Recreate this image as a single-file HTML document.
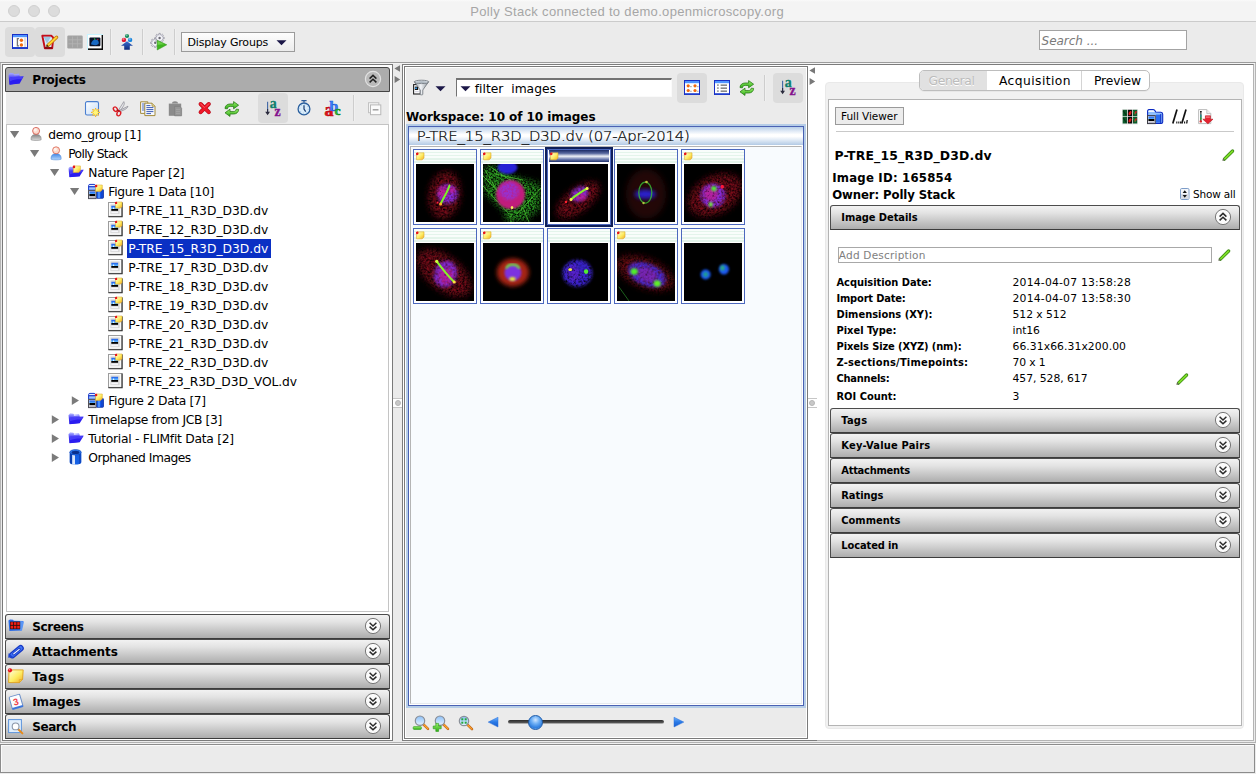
<!DOCTYPE html>
<html lang="en"><head><meta charset="utf-8"><title>Polly Stack connected to demo.openmicroscopy.org</title>
<style>
html,body{margin:0;padding:0}
body{width:1256px;height:774px;overflow:hidden;position:relative;background:#ebebeb;font-family:"DejaVu Sans","Liberation Sans",sans-serif}
#app{position:absolute;left:0;top:0;width:1256px;height:774px;overflow:hidden}
#app div,#app .ic,#app .t{position:absolute}
.t{white-space:pre;display:block}
.ic{display:block;line-height:0}
.ic svg{display:block}
.hdr{box-sizing:border-box;border:1px solid #4c4c4c;border-bottom-color:#3c3c3c;border-radius:3px 3px 0 0;background:linear-gradient(#f2f2f2 0%,#e3e3e3 30%,#c4c4c4 70%,#adadad 100%)}
</style></head>
<body><svg width="0" height="0" style="position:absolute"><defs>
<linearGradient id="gBlueV" x1="0" y1="0" x2="0" y2="1"><stop offset="0" stop-color="#9a9cff"/><stop offset=".45" stop-color="#3a2cf4"/><stop offset="1" stop-color="#1c10d8"/></linearGradient>
<linearGradient id="gTag" x1="0" y1="0" x2="1" y2="1"><stop offset="0" stop-color="#fffde0"/><stop offset=".55" stop-color="#fdec60"/><stop offset="1" stop-color="#f2a628"/></linearGradient>
<linearGradient id="gBody" x1="0" y1="0" x2="0" y2="1"><stop offset="0" stop-color="#3f86e6"/><stop offset="1" stop-color="#b6d6fb"/></linearGradient>
<linearGradient id="gBodyG" x1="0" y1="0" x2="0" y2="1"><stop offset="0" stop-color="#7d7d7d"/><stop offset="1" stop-color="#dcdcdc"/></linearGradient>
<linearGradient id="gGreen" x1="0" y1="0" x2="0" y2="1"><stop offset="0" stop-color="#9af06a"/><stop offset="1" stop-color="#2fae18"/></linearGradient>
<linearGradient id="gArrow" x1="0" y1="0" x2="0" y2="1"><stop offset="0" stop-color="#3b6fcf"/><stop offset="1" stop-color="#0e2a7c"/></linearGradient>
<linearGradient id="gSky" x1="0" y1="0" x2="0" y2="1"><stop offset="0" stop-color="#1a56e8"/><stop offset=".55" stop-color="#5ab4ff"/><stop offset=".6" stop-color="#000"/><stop offset="1" stop-color="#000"/></linearGradient>
<linearGradient id="gLens" x1="0" y1="0" x2="0" y2="1"><stop offset="0" stop-color="#8cc0f8"/><stop offset="1" stop-color="#e6f3ff"/></linearGradient>
<linearGradient id="gFun" x1="0" y1="0" x2="1" y2="0"><stop offset="0" stop-color="#8e979f"/><stop offset=".45" stop-color="#f2f5f8"/><stop offset="1" stop-color="#8a9198"/></linearGradient>
<linearGradient id="gNew" x1="0" y1="0" x2="1" y2="1"><stop offset="0" stop-color="#ffffff"/><stop offset="1" stop-color="#c4dcf8"/></linearGradient>
<linearGradient id="gTri" x1="0" y1="0" x2="0" y2="1"><stop offset="0" stop-color="#6fb4ff"/><stop offset=".5" stop-color="#2a7ae6"/><stop offset="1" stop-color="#1a5fd0"/></linearGradient>
<radialGradient id="gBall" cx=".4" cy=".3" r=".8"><stop offset="0" stop-color="#fff" stop-opacity=".55"/><stop offset=".5" stop-color="#fff" stop-opacity="0"/></radialGradient>
<filter id="b1" x="-30%" y="-30%" width="160%" height="160%"><feGaussianBlur stdDeviation="1"/></filter>
<filter id="b2" x="-30%" y="-30%" width="160%" height="160%"><feGaussianBlur stdDeviation="2"/></filter>
<filter id="b3" x="-40%" y="-40%" width="180%" height="180%"><feGaussianBlur stdDeviation="3.2"/></filter>
<filter id="b05" x="-30%" y="-30%" width="160%" height="160%"><feGaussianBlur stdDeviation=".55"/></filter>
<filter id="h3" x="-40%" y="-40%" width="180%" height="180%"><feGaussianBlur stdDeviation="3" result="b"/><feTurbulence type="fractalNoise" baseFrequency=".6" numOctaves="2" seed="4" result="t"/><feColorMatrix in="t" type="matrix" values="0 0 0 0 0 0 0 0 0 0 0 0 0 0 0 2.600 0 0 0 -.7" result="m"/><feComposite in="b" in2="m" operator="in"/></filter>
<filter id="h2" x="-40%" y="-40%" width="180%" height="180%"><feGaussianBlur stdDeviation="1.800" result="b"/><feTurbulence type="fractalNoise" baseFrequency=".45" numOctaves="2" seed="9" result="t"/><feColorMatrix in="t" type="matrix" values="0 0 0 0 0 0 0 0 0 0 0 0 0 0 0 1.800 0 0 0 -.1" result="m"/><feComposite in="b" in2="m" operator="in"/></filter>
</defs></svg><div id="app">
<div style="left:0px;top:0px;width:1256px;height:21px;background:linear-gradient(#fafafa 0,#f4f4f4 2px,#f4f4f4 100%);border-bottom:1px solid #cbcbcb"></div>
<div style="left:8px;top:5px;width:12px;height:12px;border-radius:50%;background:#dcdcdc;border:1px solid #d0d0d0;box-sizing:border-box"></div>
<div style="left:28px;top:5px;width:12px;height:12px;border-radius:50%;background:#dcdcdc;border:1px solid #d0d0d0;box-sizing:border-box"></div>
<div style="left:48px;top:5px;width:12px;height:12px;border-radius:50%;background:#dcdcdc;border:1px solid #d0d0d0;box-sizing:border-box"></div>
<span class="t" style="left:470.3px;top:4.0px;font:13px/normal 'Liberation Sans','DejaVu Sans',sans-serif;color:#a6a6a6;letter-spacing:0.323px;">Polly Stack connected to demo.openmicroscopy.org</span>
<div style="left:5px;top:27px;width:30px;height:30px;background:#dcdcdc;border-radius:4px"></div>
<div style="left:35px;top:27px;width:30px;height:30px;background:#dcdcdc;border-radius:4px"></div>
<span class="ic" style="left:12px;top:34px"><svg width="16" height="16" viewBox="0 0 16 16" style="overflow:visible"><rect x=".5" y=".5" width="15" height="14" fill="#fff" stroke="#1a2fc4"/><rect x="1" y="1" width="14" height="2.2" fill="#4f95ff"/><rect x="1" y="13" width="14" height="1.6" fill="#2244d0"/><rect x="12" y="3.2" width="2.2" height="9.8" fill="#e2e2e2"/><path d="M7 4.6h-1.6v7.2H7" stroke="#767676" fill="none" stroke-width="1.3"/><circle cx="9.4" cy="6.3" r="1.7" fill="#f26a0c"/><circle cx="9.4" cy="11" r="1.7" fill="#f26a0c"/></svg></span>
<span class="ic" style="left:41px;top:34px"><svg width="18" height="16" viewBox="0 0 18 16" style="overflow:visible"><path d="M1.300 1.800h9l2 1.800-1.100 10.600H3.900z" fill="#d4ecf8" stroke="#c40c1a" stroke-width="1.900" stroke-linejoin="round"/><path d="M2.400 2.800h7.600L6 9.400z" fill="#9cc6e2"/><path d="M3.600 13.900h7.600" stroke="#8a0a12" stroke-width="1.800"/><path d="M6.800 11.400L15.600 3.200" stroke="#c77a10" stroke-width="3.400" stroke-linecap="round"/><path d="M7 11.200L15.400 3.400" stroke="#ffd632" stroke-width="1.900" stroke-linecap="round"/><path d="M5.200 13l.8-2.600 1.900 1.800z" fill="#3a2a1a"/></svg></span>
<span class="ic" style="left:67px;top:34px"><svg width="16" height="16" viewBox="0 0 16 16" style="overflow:visible"><rect x=".3" y="1.6" width="15.4" height="12.8" rx="1.2" fill="#a2a2a2"/><path d="M1.5 5.8h13M1.5 9.8h13M5.6 2.5v11M10.4 2.5v11" stroke="#b4b4b4" stroke-width=".8"/></svg></span>
<span class="ic" style="left:87px;top:34px"><svg width="17" height="17" viewBox="0 0 17 17" style="overflow:visible"><rect x="0" y="0" width="16" height="16" fill="#c8f4ff"/><rect x="1" y="1" width="15" height="15" fill="#0a0a0a"/><rect x="1" y="1" width="13.6" height="13.4" fill="#fdfdfd"/><rect x="2.4" y="3.6" width="11" height="8.6" rx="1" fill="#08122a"/><path d="M4.2 10.6c-.2-2.4 1.8-4.8 4.2-5 2-.2 3.6 1.6 3.4 3.4-.2 1.6-1.6 2-3.6 2.2z" fill="#1769c4"/><circle cx="7.6" cy="5" r=".7" fill="#35c43a"/><circle cx="10.8" cy="5.4" r=".6" fill="#d42020"/></svg></span>
<div style="left:110px;top:29px;width:1px;height:26px;background:#cdcdcd"></div>
<div style="left:111px;top:29px;width:1px;height:26px;background:#f0f0f0"></div>
<span class="ic" style="left:118px;top:33px"><svg width="18" height="18" viewBox="0 0 18 18" style="overflow:visible"><circle cx="9" cy="3" r="2.1" fill="#0f8a58"/><circle cx="9" cy="3" r="2.1" fill="url(#gBall)"/><circle cx="5.9" cy="6.9" r="2.2" fill="#e2102c"/><circle cx="5.9" cy="6.9" r="2.2" fill="url(#gBall)"/><circle cx="12.1" cy="6.9" r="2.2" fill="#1683dc"/><circle cx="12.1" cy="6.9" r="2.2" fill="url(#gBall)"/><path d="M9 8.2l6 4.6h-3.2v4H6.2v-4H3z" fill="url(#gArrow)"/></svg></span>
<div style="left:142px;top:29px;width:1px;height:26px;background:#cdcdcd"></div>
<div style="left:143px;top:29px;width:1px;height:26px;background:#f0f0f0"></div>
<span class="ic" style="left:150px;top:33px"><svg width="18" height="18" viewBox="0 0 18 18" style="overflow:visible"><g transform="translate(5.2 9.8)"><path d="M3.42 -0.76L4.65 -0.66L4.65 0.66L3.42 0.76L2.96 1.88L3.76 2.82L2.82 3.76L1.88 2.96L0.76 3.42L0.66 4.65L-0.66 4.65L-0.76 3.42L-1.88 2.96L-2.82 3.76L-3.76 2.82L-2.96 1.88L-3.42 0.76L-4.65 0.66L-4.65 -0.66L-3.42 -0.76L-2.96 -1.88L-3.76 -2.82L-2.82 -3.76L-1.88 -2.96L-0.76 -3.42L-0.66 -4.65L0.66 -4.65L0.76 -3.42L1.88 -2.96L2.82 -3.76L3.76 -2.82L2.96 -1.88z" fill="#dedee8" stroke="#90909c" stroke-width=".7" stroke-linejoin="round"/><circle r="2.600" fill="#f4f4f8"/><circle r="1.200" fill="#6a6a74"/></g><g transform="translate(9.6 5)"><path d="M3.42 -0.76L4.65 -0.66L4.65 0.66L3.42 0.76L2.96 1.88L3.76 2.82L2.82 3.76L1.88 2.96L0.76 3.42L0.66 4.65L-0.66 4.65L-0.76 3.42L-1.88 2.96L-2.82 3.76L-3.76 2.82L-2.96 1.88L-3.42 0.76L-4.65 0.66L-4.65 -0.66L-3.42 -0.76L-2.96 -1.88L-3.76 -2.82L-2.82 -3.76L-1.88 -2.96L-0.76 -3.42L-0.66 -4.65L0.66 -4.65L0.76 -3.42L1.88 -2.96L2.82 -3.76L3.76 -2.82L2.96 -1.88z" fill="#dedee8" stroke="#90909c" stroke-width=".7" stroke-linejoin="round"/><circle r="2.600" fill="#f4f4f8"/><circle r="1.200" fill="#6a6a74"/></g><path d="M7.2 7.2v9.8l9.6-5.2z" fill="#3db41e" stroke="#2c9414" stroke-width=".5"/><path d="M7.7 8l6.6 3.2-6.6.6z" fill="#7fdc5a" opacity=".7"/></svg></span>
<div style="left:174px;top:29px;width:1px;height:26px;background:#cdcdcd"></div>
<div style="left:175px;top:29px;width:1px;height:26px;background:#f0f0f0"></div>
<div style="left:181px;top:32px;width:114px;height:20px;background:linear-gradient(#fdfdfd,#ececec);border:1px solid #9b9b9b;box-sizing:border-box"></div>
<span class="t" style="left:187.5px;top:36.0px;font:11px/normal 'DejaVu Sans','Liberation Sans',sans-serif;color:#000;letter-spacing:-0.198px;">Display Groups</span>
<svg class="ic" style="left:276px;top:39px" width="12" height="7"><path d="M0.500 1.200h10l-5 5z" fill="#1c1848"/></svg>
<div style="left:1039px;top:30px;width:148px;height:20px;background:#fff;border:1px solid #a3a3a3;box-sizing:border-box"></div>
<span class="t" style="left:1041.6px;top:34.0px;font:italic normal 12px/normal 'DejaVu Sans','Liberation Sans',sans-serif;color:#7a7a7a;letter-spacing:-0.035px;">Search ...</span>
<div style="left:0px;top:62px;width:1256px;height:1px;background:#9c9c9c"></div>
<div style="left:0px;top:63px;width:1px;height:680px;background:#b5b5b5"></div>
<div style="left:1px;top:63px;width:1255px;height:1px;background:#f4f4f4"></div>
<div style="left:1255px;top:63px;width:1px;height:680px;background:#b5b5b5"></div>
<div style="left:2px;top:64px;width:391px;height:677px;background:#fff;border:1px solid #7a7a7a;box-sizing:border-box"></div>
<div style="left:5px;top:67px;width:385px;height:25px;background:#acacac;border:1px solid #454545;border-radius:3px 3px 0 0;box-sizing:border-box"></div>
<span class="ic" style="left:8px;top:72px"><svg width="16" height="16" viewBox="0 0 16 16" style="overflow:visible"><g transform="translate(0 -1.400) scale(1 1.16)"><path d="M.6 3.200l1.500-1.300 3.200.3.900 1 4.900-.6.300 1.800z" fill="#9c9eff"/><path d="M.500 3.300l.9 8.600 10.300-.9 0-7.200-5.300.5-1.300-1.500z" fill="url(#gBlueV)"/><path d="M1.600 12.200l9.800-1 .3-.1 4-6.200-3.600.2-9.600.9z" fill="#2a1cf0"/><path d="M1.500 6.300c3-.9 6.400-1.200 10-1.200l3.800-.3-1.800 2.800c-4-.2-8 .3-11.600 1.700z" fill="#5d58ff" opacity=".55"/></g></svg></span>
<span class="t" style="left:32.3px;top:73.0px;font:bold 12px/normal 'DejaVu Sans','Liberation Sans',sans-serif;color:#000;letter-spacing:-0.213px;">Projects</span>
<svg class="ic" style="left:364px;top:70px" width="18" height="18"><circle cx="9" cy="9" r="7.6" fill="#b9b9b9" stroke="#e2e2e2" stroke-width="1.2"/><path d="M5.6 8.6L9 5.4l3.4 3.2M5.6 12.4L9 9.2l3.4 3.2" fill="none" stroke="#222" stroke-width="1.5"/></svg>
<div style="left:6px;top:92px;width:383px;height:32px;background:#ebebeb"></div>
<div style="left:258px;top:93px;width:30px;height:30px;background:#dcdcdc;border-radius:4px"></div>
<span class="ic" style="left:84px;top:101px"><svg width="17" height="17" viewBox="0 0 17 17" style="overflow:visible"><rect x="1.5" y=".6" width="13" height="13.4" rx="1.6" fill="url(#gNew)" stroke="#4a7fd0" stroke-width="1.1"/><g transform="translate(11.6 11.4)"><g fill="#f2a71a" stroke="#f2a71a" stroke-width="1"><path d="M0 -4.3L1 0H-1z" transform="rotate(0)"/><path d="M0 -4.3L1 0H-1z" transform="rotate(45)"/><path d="M0 -4.3L1 0H-1z" transform="rotate(90)"/><path d="M0 -4.3L1 0H-1z" transform="rotate(135)"/><path d="M0 -4.3L1 0H-1z" transform="rotate(180)"/><path d="M0 -4.3L1 0H-1z" transform="rotate(225)"/><path d="M0 -4.3L1 0H-1z" transform="rotate(270)"/><path d="M0 -4.3L1 0H-1z" transform="rotate(315)"/></g><g fill="#fff36a"><path d="M0 -4.3L1 0H-1z" transform="rotate(0)"/><path d="M0 -4.3L1 0H-1z" transform="rotate(45)"/><path d="M0 -4.3L1 0H-1z" transform="rotate(90)"/><path d="M0 -4.3L1 0H-1z" transform="rotate(135)"/><path d="M0 -4.3L1 0H-1z" transform="rotate(180)"/><path d="M0 -4.3L1 0H-1z" transform="rotate(225)"/><path d="M0 -4.3L1 0H-1z" transform="rotate(270)"/><path d="M0 -4.3L1 0H-1z" transform="rotate(315)"/></g><circle r="2.2" fill="#fff67a"/></g></svg></span>
<span class="ic" style="left:112px;top:101px"><svg width="17" height="16" viewBox="0 0 17 16" style="overflow:visible"><path d="M6.8 8.6L11.8.6c.9 1.6.4 3.4-.6 4.8L8.4 9.6z" fill="#e6e6ea" stroke="#8a8a92" stroke-width=".7"/><path d="M7.6 9.4L16 5.2c-.5 1.7-1.8 2.7-3.3 3.4L8.8 10.4z" fill="#d4d4da" stroke="#8a8a92" stroke-width=".7"/><ellipse cx="3.400" cy="8.200" rx="1.800" ry="2.400" transform="rotate(-35 3.400 8.200)" fill="none" stroke="#dc1c24" stroke-width="1.400"/><ellipse cx="6.800" cy="12.500" rx="1.800" ry="2.400" transform="rotate(25 6.800 12.500)" fill="none" stroke="#dc1c24" stroke-width="1.400"/><path d="M5 9l2.4 1M7.2 10.2l.4-.6" stroke="#b01018" stroke-width="1.4"/></svg></span>
<span class="ic" style="left:140px;top:101px"><svg width="16" height="16" viewBox="0 0 16 16" style="overflow:visible"><path d="M.6.8h7.2v11.6H.6z" fill="#f4f7ff" stroke="#a48c3c" stroke-width="1"/><path d="M2 3h3M2 5h3M2 7h3M2 9h3" stroke="#3c5cb4" stroke-width=".9"/><path d="M4.8 2.2h7.2l3 3v9.4H4.8z" fill="#f6f9ff" stroke="#a48c3c" stroke-width="1"/><path d="M12 2.2v3h3" fill="#e6d9a0" stroke="#a48c3c" stroke-width=".8"/><path d="M6.4 4.6h4M6.4 6.6h7M6.4 8.6h7M6.4 10.6h7M6.4 12.6h4.6" stroke="#3c5cb4" stroke-width="1"/></svg></span>
<span class="ic" style="left:168px;top:101px"><svg width="15" height="16" viewBox="0 0 15 16" style="overflow:visible"><path d="M.8 2.6h12.4v12.2H.8z" fill="#8b8b8b"/><path d="M4 2.6c0-1.6 1.2-2.4 3-2.4s3 .8 3 2.4z" fill="#8b8b8b"/><path d="M6.6 5.4h5.2l1.8 1.8v7.6h-7z" fill="#969696" stroke="#7e7e7e" stroke-width=".7"/><path d="M8 8.4h4M8 10.4h4M8 12.4h4" stroke="#a8a8a8" stroke-width=".8"/></svg></span>
<span class="ic" style="left:196px;top:101px"><svg width="16" height="15" viewBox="0 0 16 15" style="overflow:visible"><path d="M4.6 3l8.200 8.200M12.800 3L4.600 11.200" stroke="#b00a18" stroke-width="4" stroke-linecap="round"/><path d="M4.600 3l8.200 8.200M12.800 3L4.600 11.200" stroke="#ee1828" stroke-width="2.900" stroke-linecap="round"/><path d="M4.600 2.800l3.800 3.800M12.800 2.800L10.200 5.400" stroke="#ff6a70" stroke-width="1" stroke-linecap="round" opacity=".8"/></svg></span>
<span class="ic" style="left:224px;top:101px"><svg width="16" height="16" viewBox="0 0 16 16" style="overflow:visible"><path d="M1 7.6C1 4.6 3.4 3 6 3h3.6V.6L14.6 4.2 9.6 7.8V5.4H6.4C4.6 5.4 3.6 6.2 3.4 7.8z" fill="url(#gGreen)" stroke="#2a7a18" stroke-width=".8" stroke-linejoin="round"/><path d="M14.6 8.4c0 3-2.4 4.6-5 4.6H6v2.4L1 11.8l5-3.6v2.4h3.200c1.800 0 2.800-.8 3-2.400z" fill="url(#gGreen)" stroke="#2a7a18" stroke-width=".8" stroke-linejoin="round"/></svg></span>
<span class="ic" style="left:265px;top:101px"><svg width="18" height="16" viewBox="0 0 18 16" style="overflow:visible"><path d="M2.6.8v12" stroke="#3f66a4" stroke-width="1.1"/><path d="M2.6 8v5" stroke="#2c2c40" stroke-width="1.1"/><path d="M.2 10.800L2.600 14.200 5 10.800z" fill="#2a2a3c"/><text x="4.800" y="7" font-family="'Liberation Serif','DejaVu Serif',serif" font-weight="bold" font-size="13.800" fill="#107f6c" stroke="#107f6c" stroke-width=".35">a</text><text x="9.600" y="14.900" font-family="'Liberation Serif','DejaVu Serif',serif" font-weight="bold" font-size="13.800" fill="#84128e" stroke="#84128e" stroke-width=".35">z</text></svg></span>
<span class="ic" style="left:296px;top:99.5px"><svg width="16" height="16" viewBox="0 0 16 16" style="overflow:visible"><path d="M5.400.7h5.200M8 .7v1.800" stroke="#2a5c9c" stroke-width="1.300"/><circle cx="8" cy="8.900" r="5.900" fill="#d9ecfa" stroke="#2a5f9e" stroke-width="1.300"/><circle cx="8" cy="8.900" r="4.300" fill="none" stroke="#8fb6da" stroke-width=".9" stroke-dasharray=".8 2.577"/><path d="M8 5.300v3.800l1.700 2.500" stroke="#163a70" stroke-width="1.200" fill="none"/></svg></span>
<span class="ic" style="left:325px;top:101px"><svg width="17" height="17" viewBox="0 0 17 17" style="overflow:visible"><text x="-.4" y="14.600" font-family="'Liberation Serif','DejaVu Serif',serif" font-weight="bold" font-size="18" fill="#e0121c" stroke="#c00c14" stroke-width=".7">a</text><text x="4.500" y="9.900" font-family="'Liberation Serif','DejaVu Serif',serif" font-weight="bold" font-size="15.500" fill="#3a84f8" stroke="#1c5ce0" stroke-width=".6">b</text><text x="9.800" y="13.500" font-family="'Liberation Serif','DejaVu Serif',serif" font-weight="bold" font-size="13" fill="#2cc038" stroke="#128a20" stroke-width=".6">c</text></svg></span>
<div style="left:353px;top:95px;width:1px;height:26px;background:#cdcdcd"></div>
<div style="left:354px;top:95px;width:1px;height:26px;background:#f0f0f0"></div>
<span class="ic" style="left:366px;top:101px"><svg width="16" height="15" viewBox="0 0 16 15" style="overflow:visible"><rect x="2.500" y="1.700" width="10.300" height="10" fill="#f4f4f4" stroke="#c2c2c2" stroke-width="1"/><rect x="4.500" y="3.900" width="10.300" height="9.800" fill="#fbfbfb" stroke="#b8b8b8" stroke-width="1"/><path d="M6.700 8.800h5.800" stroke="#9a9a9a" stroke-width="1.400"/></svg></span>
<div style="left:6px;top:124px;width:383px;height:488px;background:#fff;border:1px solid #c4c4c4;box-sizing:border-box"></div>
<svg class="ic" style="left:10px;top:130px" width="10" height="9"><path d="M0 0.900h9.200L4.600 8.100z" fill="#797979"/></svg>
<span class="ic" style="left:28px;top:126px"><svg width="16" height="16" viewBox="0 0 16 16" style="overflow:visible"><path d="M3.100 13.900c-.5-3.500 1.500-5.700 5-5.700s5.500 2.200 5 5.700c-2.800.8-7.200.8-10 0z" fill="url(#gBodyG)" stroke="#7a7a7a" stroke-width=".5"/><circle cx="8.100" cy="4.900" r="3.500" fill="#fcd9cc" stroke="#cc4438" stroke-width=".75"/><circle cx="7.300" cy="3.900" r="1.600" fill="#fff" opacity=".65"/></svg></span>
<span class="t" style="left:48.3px;top:128.0px;font:12.3px/normal 'DejaVu Sans','Liberation Sans',sans-serif;color:#000;letter-spacing:-0.398px;">demo_group [1]</span>
<svg class="ic" style="left:30px;top:149px" width="10" height="9"><path d="M0 0.900h9.200L4.600 8.100z" fill="#797979"/></svg>
<span class="ic" style="left:48px;top:145px"><svg width="16" height="16" viewBox="0 0 16 16" style="overflow:visible"><path d="M3.100 14.300c-.5-3.500 1.500-5.700 5-5.700s5.500 2.200 5 5.700c-2.800.8-7.200.8-10 0z" fill="url(#gBody)" stroke="#4a84d4" stroke-width=".5"/><circle cx="8.100" cy="5.300" r="3.500" fill="#fcd9cc" stroke="#d85a44" stroke-width=".75"/><circle cx="7.300" cy="4.300" r="1.600" fill="#fff" opacity=".65"/></svg></span>
<span class="t" style="left:68.3px;top:147.0px;font:12.3px/normal 'DejaVu Sans','Liberation Sans',sans-serif;color:#000;letter-spacing:-0.689px;">Polly Stack</span>
<svg class="ic" style="left:50px;top:168px" width="10" height="9"><path d="M0 0.900h9.200L4.600 8.100z" fill="#797979"/></svg>
<span class="ic" style="left:68px;top:164px"><svg width="16" height="16" viewBox="0 0 16 16" style="overflow:visible"><g transform="translate(0 .8) scale(1 1.03)"><path d="M.6 3.200l1.500-1.300 3.200.3.900 1 4.900-.6.300 1.800z" fill="#9c9eff"/><path d="M.500 3.300l.9 8.600 10.300-.9 0-7.200-5.300.5-1.300-1.500z" fill="url(#gBlueV)"/><path d="M1.600 12.200l9.800-1 .3-.1 4-6.200-3.600.2-9.600.9z" fill="#2a1cf0"/><path d="M1.500 6.300c3-.9 6.400-1.200 10-1.200l3.800-.3-1.800 2.800c-4-.2-8 .3-11.600 1.700z" fill="#5d58ff" opacity=".55"/></g><g transform="translate(4.9 1.5) scale(1.07)"><path d="M.9.4h6.100v4.600l-1.600 1.600h-5v-5.700z" fill="url(#gTag)" stroke="#dca624" stroke-width=".5"/><circle cx="1" cy="1.300" r="1.200" fill="#e8141c"/></g></svg></span>
<span class="t" style="left:88.3px;top:166.0px;font:12.3px/normal 'DejaVu Sans','Liberation Sans',sans-serif;color:#000;letter-spacing:-0.360px;">Nature Paper [2]</span>
<svg class="ic" style="left:70px;top:187px" width="10" height="9"><path d="M0 0.900h9.200L4.600 8.100z" fill="#797979"/></svg>
<span class="ic" style="left:88px;top:183px"><svg width="16" height="16" viewBox="0 0 16 16" style="overflow:visible"><g transform="translate(0 .9)"><path d="M.6 1.800c0-.9.500-1.300 1.200-1.300h4.400c.6 0 1 .3 1.200 1.100l.4 1.300H.6z" fill="#eaf2ff" stroke="#1434c8" stroke-width="1"/><rect x=".6" y="2.900" width="7.400" height="3.400" fill="#9cc4ff" stroke="#1434c8" stroke-width="1"/><rect x="8.200" y="5.600" width="7.300" height="8.800" rx=".8" fill="#1458ea" stroke="#0c2fa4" stroke-width=".8"/><path d="M11 6v8" stroke="#5a9cff" stroke-width="1.600"/><path d="M14 6.200v8" stroke="#0c2fa4" stroke-width=".8"/><rect x=".5" y="6.700" width="7.500" height="8" fill="#e8e8ee" stroke="#50505a" stroke-width="1"/><rect x="1.400" y="7.600" width="5.700" height="4.700" fill="url(#gSky)"/><rect x="1.400" y="13" width="5.700" height="1" fill="#b4b4c4"/><g transform="translate(7.1 0.7) scale(1.03)"><path d="M.9.4h6.100v4.600l-1.600 1.600h-5v-5.700z" fill="url(#gTag)" stroke="#dca624" stroke-width=".5"/><circle cx="1" cy="1.300" r="1.200" fill="#e8141c"/></g></g></svg></span>
<span class="t" style="left:108.3px;top:185.0px;font:12.3px/normal 'DejaVu Sans','Liberation Sans',sans-serif;color:#000;letter-spacing:-0.334px;">Figure 1 Data [10]</span>
<span class="ic" style="left:108px;top:202px"><svg width="16" height="16" viewBox="0 0 16 16" style="overflow:visible"><rect x=".5" y=".5" width="13.400" height="13.900" fill="#fafafa" stroke="#9c9c9c" stroke-width="1"/><path d="M14.100 .400v14.300H.400" fill="none" stroke="#2e2e2e" stroke-width="1.100"/><rect x="2.400" y="2.400" width="9.300" height="9.800" fill="#d8d8d8"/><rect x="3.300" y="3.800" width="6.800" height="5" fill="url(#gSky)"/><circle cx="5.600" cy="6.300" r=".7" fill="#fff"/><rect x="3.300" y="9.700" width="6.800" height="1.500" fill="#f6f6fa"/><g transform="translate(7.1 -0.4) scale(0.99)"><path d="M.9.4h6.100v4.600l-1.600 1.600h-5v-5.700z" fill="url(#gTag)" stroke="#dca624" stroke-width=".5"/><circle cx="1" cy="1.300" r="1.200" fill="#e8141c"/></g></svg></span>
<span class="t" style="left:128.3px;top:204.0px;font:12.3px/normal 'DejaVu Sans','Liberation Sans',sans-serif;color:#000;letter-spacing:0.002px;">P-TRE_11_R3D_D3D.dv</span>
<span class="ic" style="left:108px;top:221px"><svg width="16" height="16" viewBox="0 0 16 16" style="overflow:visible"><rect x=".5" y=".5" width="13.400" height="13.900" fill="#fafafa" stroke="#9c9c9c" stroke-width="1"/><path d="M14.100 .400v14.300H.400" fill="none" stroke="#2e2e2e" stroke-width="1.100"/><rect x="2.400" y="2.400" width="9.300" height="9.800" fill="#d8d8d8"/><rect x="3.300" y="3.800" width="6.800" height="5" fill="url(#gSky)"/><circle cx="5.600" cy="6.300" r=".7" fill="#fff"/><rect x="3.300" y="9.700" width="6.800" height="1.500" fill="#f6f6fa"/><g transform="translate(7.1 -0.4) scale(0.99)"><path d="M.9.4h6.100v4.600l-1.600 1.600h-5v-5.700z" fill="url(#gTag)" stroke="#dca624" stroke-width=".5"/><circle cx="1" cy="1.300" r="1.200" fill="#e8141c"/></g></svg></span>
<span class="t" style="left:128.3px;top:223.0px;font:12.3px/normal 'DejaVu Sans','Liberation Sans',sans-serif;color:#000;letter-spacing:0.002px;">P-TRE_12_R3D_D3D.dv</span>
<span class="ic" style="left:108px;top:240px"><svg width="16" height="16" viewBox="0 0 16 16" style="overflow:visible"><rect x=".5" y=".5" width="13.400" height="13.900" fill="#fafafa" stroke="#9c9c9c" stroke-width="1"/><path d="M14.100 .400v14.300H.400" fill="none" stroke="#2e2e2e" stroke-width="1.100"/><rect x="2.400" y="2.400" width="9.300" height="9.800" fill="#d8d8d8"/><rect x="3.300" y="3.800" width="6.800" height="5" fill="url(#gSky)"/><circle cx="5.600" cy="6.300" r=".7" fill="#fff"/><rect x="3.300" y="9.700" width="6.800" height="1.500" fill="#f6f6fa"/><g transform="translate(7.1 -0.4) scale(0.99)"><path d="M.9.4h6.100v4.600l-1.600 1.600h-5v-5.700z" fill="url(#gTag)" stroke="#dca624" stroke-width=".5"/><circle cx="1" cy="1.300" r="1.200" fill="#e8141c"/></g></svg></span>
<div style="left:127px;top:239px;width:144px;height:19px;background:#0a30c4"></div>
<span class="t" style="left:128.3px;top:242.0px;font:12.3px/normal 'DejaVu Sans','Liberation Sans',sans-serif;color:#fff;letter-spacing:0.002px;">P-TRE_15_R3D_D3D.dv</span>
<span class="ic" style="left:108px;top:259px"><svg width="16" height="16" viewBox="0 0 16 16" style="overflow:visible"><rect x=".5" y=".5" width="13.400" height="13.900" fill="#fafafa" stroke="#9c9c9c" stroke-width="1"/><path d="M14.100 .400v14.300H.400" fill="none" stroke="#2e2e2e" stroke-width="1.100"/><rect x="2.400" y="2.400" width="9.300" height="9.800" fill="#d8d8d8"/><rect x="3.300" y="3.800" width="6.800" height="5" fill="url(#gSky)"/><circle cx="5.600" cy="6.300" r=".7" fill="#fff"/><rect x="3.300" y="9.700" width="6.800" height="1.500" fill="#f6f6fa"/></svg></span>
<span class="t" style="left:128.3px;top:261.0px;font:12.3px/normal 'DejaVu Sans','Liberation Sans',sans-serif;color:#000;letter-spacing:0.002px;">P-TRE_17_R3D_D3D.dv</span>
<span class="ic" style="left:108px;top:278px"><svg width="16" height="16" viewBox="0 0 16 16" style="overflow:visible"><rect x=".5" y=".5" width="13.400" height="13.900" fill="#fafafa" stroke="#9c9c9c" stroke-width="1"/><path d="M14.100 .400v14.300H.400" fill="none" stroke="#2e2e2e" stroke-width="1.100"/><rect x="2.400" y="2.400" width="9.300" height="9.800" fill="#d8d8d8"/><rect x="3.300" y="3.800" width="6.800" height="5" fill="url(#gSky)"/><circle cx="5.600" cy="6.300" r=".7" fill="#fff"/><rect x="3.300" y="9.700" width="6.800" height="1.500" fill="#f6f6fa"/><g transform="translate(7.1 -0.4) scale(0.99)"><path d="M.9.4h6.100v4.600l-1.600 1.600h-5v-5.700z" fill="url(#gTag)" stroke="#dca624" stroke-width=".5"/><circle cx="1" cy="1.300" r="1.200" fill="#e8141c"/></g></svg></span>
<span class="t" style="left:128.3px;top:280.0px;font:12.3px/normal 'DejaVu Sans','Liberation Sans',sans-serif;color:#000;letter-spacing:0.002px;">P-TRE_18_R3D_D3D.dv</span>
<span class="ic" style="left:108px;top:297px"><svg width="16" height="16" viewBox="0 0 16 16" style="overflow:visible"><rect x=".5" y=".5" width="13.400" height="13.900" fill="#fafafa" stroke="#9c9c9c" stroke-width="1"/><path d="M14.100 .400v14.300H.400" fill="none" stroke="#2e2e2e" stroke-width="1.100"/><rect x="2.400" y="2.400" width="9.300" height="9.800" fill="#d8d8d8"/><rect x="3.300" y="3.800" width="6.800" height="5" fill="url(#gSky)"/><circle cx="5.600" cy="6.300" r=".7" fill="#fff"/><rect x="3.300" y="9.700" width="6.800" height="1.500" fill="#f6f6fa"/><g transform="translate(7.1 -0.4) scale(0.99)"><path d="M.9.4h6.100v4.600l-1.600 1.600h-5v-5.700z" fill="url(#gTag)" stroke="#dca624" stroke-width=".5"/><circle cx="1" cy="1.300" r="1.200" fill="#e8141c"/></g></svg></span>
<span class="t" style="left:128.3px;top:299.0px;font:12.3px/normal 'DejaVu Sans','Liberation Sans',sans-serif;color:#000;letter-spacing:0.002px;">P-TRE_19_R3D_D3D.dv</span>
<span class="ic" style="left:108px;top:316px"><svg width="16" height="16" viewBox="0 0 16 16" style="overflow:visible"><rect x=".5" y=".5" width="13.400" height="13.900" fill="#fafafa" stroke="#9c9c9c" stroke-width="1"/><path d="M14.100 .400v14.300H.400" fill="none" stroke="#2e2e2e" stroke-width="1.100"/><rect x="2.400" y="2.400" width="9.300" height="9.800" fill="#d8d8d8"/><rect x="3.300" y="3.800" width="6.800" height="5" fill="url(#gSky)"/><circle cx="5.600" cy="6.300" r=".7" fill="#fff"/><rect x="3.300" y="9.700" width="6.800" height="1.500" fill="#f6f6fa"/><g transform="translate(7.1 -0.4) scale(0.99)"><path d="M.9.4h6.100v4.600l-1.600 1.600h-5v-5.700z" fill="url(#gTag)" stroke="#dca624" stroke-width=".5"/><circle cx="1" cy="1.300" r="1.200" fill="#e8141c"/></g></svg></span>
<span class="t" style="left:128.3px;top:318.0px;font:12.3px/normal 'DejaVu Sans','Liberation Sans',sans-serif;color:#000;letter-spacing:0.002px;">P-TRE_20_R3D_D3D.dv</span>
<span class="ic" style="left:108px;top:335px"><svg width="16" height="16" viewBox="0 0 16 16" style="overflow:visible"><rect x=".5" y=".5" width="13.400" height="13.900" fill="#fafafa" stroke="#9c9c9c" stroke-width="1"/><path d="M14.100 .400v14.300H.400" fill="none" stroke="#2e2e2e" stroke-width="1.100"/><rect x="2.400" y="2.400" width="9.300" height="9.800" fill="#d8d8d8"/><rect x="3.300" y="3.800" width="6.800" height="5" fill="url(#gSky)"/><circle cx="5.600" cy="6.300" r=".7" fill="#fff"/><rect x="3.300" y="9.700" width="6.800" height="1.500" fill="#f6f6fa"/></svg></span>
<span class="t" style="left:128.3px;top:337.0px;font:12.3px/normal 'DejaVu Sans','Liberation Sans',sans-serif;color:#000;letter-spacing:0.002px;">P-TRE_21_R3D_D3D.dv</span>
<span class="ic" style="left:108px;top:354px"><svg width="16" height="16" viewBox="0 0 16 16" style="overflow:visible"><rect x=".5" y=".5" width="13.400" height="13.900" fill="#fafafa" stroke="#9c9c9c" stroke-width="1"/><path d="M14.100 .400v14.300H.400" fill="none" stroke="#2e2e2e" stroke-width="1.100"/><rect x="2.400" y="2.400" width="9.300" height="9.800" fill="#d8d8d8"/><rect x="3.300" y="3.800" width="6.800" height="5" fill="url(#gSky)"/><circle cx="5.600" cy="6.300" r=".7" fill="#fff"/><rect x="3.300" y="9.700" width="6.800" height="1.500" fill="#f6f6fa"/><g transform="translate(7.1 -0.4) scale(0.99)"><path d="M.9.4h6.100v4.600l-1.600 1.600h-5v-5.700z" fill="url(#gTag)" stroke="#dca624" stroke-width=".5"/><circle cx="1" cy="1.300" r="1.200" fill="#e8141c"/></g></svg></span>
<span class="t" style="left:128.3px;top:356.0px;font:12.3px/normal 'DejaVu Sans','Liberation Sans',sans-serif;color:#000;letter-spacing:0.002px;">P-TRE_22_R3D_D3D.dv</span>
<span class="ic" style="left:108px;top:373px"><svg width="16" height="16" viewBox="0 0 16 16" style="overflow:visible"><rect x=".5" y=".5" width="13.400" height="13.900" fill="#fafafa" stroke="#9c9c9c" stroke-width="1"/><path d="M14.100 .400v14.300H.400" fill="none" stroke="#2e2e2e" stroke-width="1.100"/><rect x="2.400" y="2.400" width="9.300" height="9.800" fill="#d8d8d8"/><rect x="3.300" y="3.800" width="6.800" height="5" fill="url(#gSky)"/><circle cx="5.600" cy="6.300" r=".7" fill="#fff"/><rect x="3.300" y="9.700" width="6.800" height="1.500" fill="#f6f6fa"/></svg></span>
<span class="t" style="left:128.3px;top:375.0px;font:12.3px/normal 'DejaVu Sans','Liberation Sans',sans-serif;color:#000;letter-spacing:-0.093px;">P-TRE_23_R3D_D3D_VOL.dv</span>
<svg class="ic" style="left:71px;top:396px" width="9" height="10"><path d="M0.8 0.3v8.6L8 4.6z" fill="#7b7b7b"/></svg>
<span class="ic" style="left:88px;top:392px"><svg width="16" height="16" viewBox="0 0 16 16" style="overflow:visible"><g transform="translate(0 .9)"><path d="M.6 1.800c0-.9.500-1.300 1.200-1.300h4.400c.6 0 1 .3 1.200 1.100l.4 1.300H.6z" fill="#eaf2ff" stroke="#1434c8" stroke-width="1"/><rect x=".6" y="2.900" width="7.400" height="3.400" fill="#9cc4ff" stroke="#1434c8" stroke-width="1"/><rect x="8.200" y="5.600" width="7.300" height="8.800" rx=".8" fill="#1458ea" stroke="#0c2fa4" stroke-width=".8"/><path d="M11 6v8" stroke="#5a9cff" stroke-width="1.600"/><path d="M14 6.200v8" stroke="#0c2fa4" stroke-width=".8"/><rect x=".5" y="6.700" width="7.500" height="8" fill="#e8e8ee" stroke="#50505a" stroke-width="1"/><rect x="1.400" y="7.600" width="5.700" height="4.700" fill="url(#gSky)"/><rect x="1.400" y="13" width="5.700" height="1" fill="#b4b4c4"/><g transform="translate(7.1 0.7) scale(1.03)"><path d="M.9.4h6.100v4.600l-1.600 1.600h-5v-5.700z" fill="url(#gTag)" stroke="#dca624" stroke-width=".5"/><circle cx="1" cy="1.300" r="1.200" fill="#e8141c"/></g></g></svg></span>
<span class="t" style="left:108.3px;top:394.0px;font:12.3px/normal 'DejaVu Sans','Liberation Sans',sans-serif;color:#000;letter-spacing:-0.381px;">Figure 2 Data [7]</span>
<svg class="ic" style="left:51px;top:415px" width="9" height="10"><path d="M0.8 0.3v8.6L8 4.6z" fill="#7b7b7b"/></svg>
<span class="ic" style="left:68px;top:411px"><svg width="16" height="16" viewBox="0 0 16 16" style="overflow:visible"><g transform="translate(0 .5) scale(1 1.05)"><path d="M.6 3.200l1.500-1.300 3.200.3.900 1 4.900-.6.300 1.800z" fill="#9c9eff"/><path d="M.500 3.300l.9 8.600 10.300-.9 0-7.200-5.300.5-1.300-1.500z" fill="url(#gBlueV)"/><path d="M1.600 12.200l9.800-1 .3-.1 4-6.200-3.600.2-9.600.9z" fill="#2a1cf0"/><path d="M1.500 6.300c3-.9 6.400-1.200 10-1.200l3.800-.3-1.800 2.800c-4-.2-8 .3-11.600 1.700z" fill="#5d58ff" opacity=".55"/></g></svg></span>
<span class="t" style="left:88.3px;top:413.0px;font:12.3px/normal 'DejaVu Sans','Liberation Sans',sans-serif;color:#000;letter-spacing:-0.342px;">Timelapse from JCB [3]</span>
<svg class="ic" style="left:51px;top:434px" width="9" height="10"><path d="M0.8 0.3v8.6L8 4.6z" fill="#7b7b7b"/></svg>
<span class="ic" style="left:68px;top:430px"><svg width="16" height="16" viewBox="0 0 16 16" style="overflow:visible"><g transform="translate(0 .5) scale(1 1.05)"><path d="M.6 3.200l1.500-1.300 3.200.3.900 1 4.900-.6.300 1.800z" fill="#9c9eff"/><path d="M.500 3.300l.9 8.600 10.300-.9 0-7.200-5.300.5-1.300-1.500z" fill="url(#gBlueV)"/><path d="M1.600 12.200l9.800-1 .3-.1 4-6.200-3.600.2-9.600.9z" fill="#2a1cf0"/><path d="M1.500 6.300c3-.9 6.400-1.200 10-1.200l3.800-.3-1.800 2.800c-4-.2-8 .3-11.600 1.700z" fill="#5d58ff" opacity=".55"/></g></svg></span>
<span class="t" style="left:88.3px;top:432.0px;font:12.3px/normal 'DejaVu Sans','Liberation Sans',sans-serif;color:#000;letter-spacing:-0.270px;">Tutorial - FLIMfit Data [2]</span>
<svg class="ic" style="left:51px;top:453px" width="9" height="10"><path d="M0.8 0.3v8.6L8 4.6z" fill="#7b7b7b"/></svg>
<span class="ic" style="left:68px;top:449px"><svg width="15" height="16" viewBox="0 0 15 16" style="overflow:visible"><path d="M1.800 3.200v10c0 1.400 2.600 2.400 5.700 2.400s5.700-1 5.700-2.400v-10z" fill="#1560e4"/><path d="M1.800 3.200v10c0 1 .9 1.600 2.200 2V5.200z" fill="#0b3fb0"/><path d="M4.200 6v9.200c.9.300 1.800.400 2.800.400V6.200z" fill="#fff" opacity=".85"/><path d="M11 5.600v9.400c1.400-.4 2.200-1.100 2.200-1.800V4z" fill="#0e49c4"/><ellipse cx="7.500" cy="3.200" rx="5.700" ry="2.600" fill="#2d7df4" stroke="#0d3fae" stroke-width=".6"/><ellipse cx="7.500" cy="3.400" rx="4" ry="1.600" fill="#0a2f8c"/></svg></span>
<span class="t" style="left:88.3px;top:451.0px;font:12.3px/normal 'DejaVu Sans','Liberation Sans',sans-serif;color:#000;letter-spacing:-0.492px;">Orphaned Images</span>
<div class="hdr" style="left:5px;top:614px;width:385px;height:25px;"></div>
<span class="ic" style="left:8px;top:619px"><svg width="17" height="13" viewBox="0 0 17 13" style="overflow:visible"><path d="M.4 1.600l1.600-1.200 3 .3.800 1 9.400.4-1.600 9.400L1.400 12z" fill="#2b6be4"/><path d="M12 2l4 .6-2 9-2 .1z" fill="#5a96f6"/><rect x="2" y="2.600" width="10.200" height="7.600" fill="#30100c"/><rect x="2.6" y="3.2" width="2.500" height="2.700" fill="#f01c14"/><rect x="2.6" y="6.800000000000001" width="2.500" height="2.700" fill="#f01c14"/><rect x="5.9" y="3.2" width="2.500" height="2.700" fill="#f01c14"/><rect x="5.9" y="6.800000000000001" width="2.500" height="2.700" fill="#f01c14"/><rect x="9.2" y="3.2" width="2.500" height="2.700" fill="#f01c14"/><rect x="9.2" y="6.800000000000001" width="2.500" height="2.700" fill="#f01c14"/></svg></span>
<span class="t" style="left:32.2px;top:620.0px;font:bold 12px/normal 'DejaVu Sans','Liberation Sans',sans-serif;color:#000;letter-spacing:-0.306px;">Screens</span>
<svg class="ic" style="left:364px;top:617px" width="18" height="18"><circle cx="9" cy="9" r="7.6" fill="#fbfbfb" stroke="#777" stroke-width="1"/><path d="M5.6 5.8L9 9l3.4-3.2M5.6 9.6L9 12.8l3.4-3.2" fill="none" stroke="#2a2a2a" stroke-width="1.5"/></svg>
<div class="hdr" style="left:5px;top:639px;width:385px;height:25px;"></div>
<span class="ic" style="left:8px;top:644px"><svg width="17" height="15" viewBox="0 0 17 15" style="overflow:visible"><g fill="none" stroke-linecap="round" stroke-linejoin="round"><path d="M4.200 11.200L12.600 4.200" stroke="#1638c4" stroke-width="6.400"/><path d="M4.200 11.200L12.600 4.200" stroke="#3f74f4" stroke-width="4"/><path d="M5.600 10L11.400 5.200" stroke="#1638c4" stroke-width="2.600"/><path d="M5.800 9.800L11.200 5.400" stroke="#f4f7ff" stroke-width="1.100"/></g><path d="M.2 13.800l.4-4.600 4.600 3.800z" fill="#1c44d4"/></svg></span>
<span class="t" style="left:32.2px;top:645.0px;font:bold 12px/normal 'DejaVu Sans','Liberation Sans',sans-serif;color:#000;letter-spacing:-0.098px;">Attachments</span>
<svg class="ic" style="left:364px;top:642px" width="18" height="18"><circle cx="9" cy="9" r="7.6" fill="#fbfbfb" stroke="#777" stroke-width="1"/><path d="M5.6 5.8L9 9l3.4-3.2M5.6 9.6L9 12.8l3.4-3.2" fill="none" stroke="#2a2a2a" stroke-width="1.5"/></svg>
<div class="hdr" style="left:5px;top:664px;width:385px;height:25px;"></div>
<span class="ic" style="left:8px;top:669px"><svg width="16" height="15" viewBox="0 0 16 15" style="overflow:visible"><path d="M1 .9h14.200l-.6 9.300-3.200 3.400H.6z" fill="url(#gTag)" stroke="#e0a21c" stroke-width=".9"/><path d="M14.600 10.200l-3.400.5.200 2.900z" fill="#f7c64a" stroke="#d89a18" stroke-width=".5"/><circle cx="2" cy="1.300" r="2.100" fill="#e6101c"/><circle cx="1.500" cy=".8" r=".7" fill="#ff8a8a"/></svg></span>
<span class="t" style="left:32.2px;top:670.0px;font:bold 12px/normal 'DejaVu Sans','Liberation Sans',sans-serif;color:#000;letter-spacing:0.508px;">Tags</span>
<svg class="ic" style="left:364px;top:667px" width="18" height="18"><circle cx="9" cy="9" r="7.6" fill="#fbfbfb" stroke="#777" stroke-width="1"/><path d="M5.6 5.8L9 9l3.4-3.2M5.6 9.6L9 12.8l3.4-3.2" fill="none" stroke="#2a2a2a" stroke-width="1.5"/></svg>
<div class="hdr" style="left:5px;top:689px;width:385px;height:25px;"></div>
<span class="ic" style="left:8px;top:694px"><svg width="16" height="16" viewBox="0 0 16 16" style="overflow:visible"><g transform="rotate(-16 8 8)"><rect x="2.600" y="1.400" width="11" height="13" rx="1" fill="#fbfdff" stroke="#6a8ec8" stroke-width="1"/><rect x="2.600" y="12.800" width="11" height="1.800" fill="#3a74dc"/><text x="5.400" y="11.200" font-family="'Liberation Sans','DejaVu Sans',sans-serif" font-weight="bold" font-size="9.500" fill="#f0444c">3</text></g></svg></span>
<span class="t" style="left:32.2px;top:695.0px;font:bold 12px/normal 'DejaVu Sans','Liberation Sans',sans-serif;color:#000;letter-spacing:-0.073px;">Images</span>
<svg class="ic" style="left:364px;top:692px" width="18" height="18"><circle cx="9" cy="9" r="7.6" fill="#fbfbfb" stroke="#777" stroke-width="1"/><path d="M5.6 5.8L9 9l3.4-3.2M5.6 9.6L9 12.8l3.4-3.2" fill="none" stroke="#2a2a2a" stroke-width="1.5"/></svg>
<div class="hdr" style="left:5px;top:714px;width:385px;height:25px;"></div>
<span class="ic" style="left:8px;top:719px"><svg width="16" height="16" viewBox="0 0 16 16" style="overflow:visible"><rect x=".6" y=".6" width="12.800" height="13" fill="#e2effc" stroke="#5c94dc" stroke-width="1"/><path d="M10 10l4.400 4.400" stroke="#e88a18" stroke-width="2" stroke-linecap="round"/><circle cx="7.600" cy="7.400" r="3.400" fill="#fff" stroke="#8a96a8" stroke-width="1.100"/></svg></span>
<span class="t" style="left:32.2px;top:720.0px;font:bold 12px/normal 'DejaVu Sans','Liberation Sans',sans-serif;color:#000;letter-spacing:-0.409px;">Search</span>
<svg class="ic" style="left:364px;top:717px" width="18" height="18"><circle cx="9" cy="9" r="7.6" fill="#fbfbfb" stroke="#777" stroke-width="1"/><path d="M5.6 5.8L9 9l3.4-3.2M5.6 9.6L9 12.8l3.4-3.2" fill="none" stroke="#2a2a2a" stroke-width="1.5"/></svg>
<svg class="ic" style="left:394px;top:65px" width="7" height="19"><path d="M6 0.3v6.4L0.4 3.5zM0.6 11v7l5.6-3.5z" fill="#787878"/></svg>
<div style="left:393px;top:398px;width:9px;height:10px;background:#fff;border-top:1px solid #c6c6c6;border-bottom:1px solid #c6c6c6;box-sizing:border-box"></div>
<div style="left:394.5px;top:400px;width:6px;height:6px;border-radius:50%;background:#c8c8c8;border:1px solid #b6b6b6;box-sizing:border-box"></div>
<div style="left:402px;top:64px;width:852px;height:677px;border:1px solid #7c7c7c;border-bottom-color:#b4b4b4;border-right-color:#b4b4b4;box-sizing:border-box;background:#fff"></div>
<div style="left:402px;top:740px;width:415px;height:1px;background:#7c7c7c"></div>
<div style="left:404px;top:66px;width:404px;height:673px;border:1px solid #7a7a7a;box-sizing:border-box;box-shadow:inset 1px 1px 0 #fff,inset -1px -1px 0 #fff;background:#ebebeb"></div>
<span class="ic" style="left:413px;top:80px"><svg width="17" height="16" viewBox="0 0 17 16" style="overflow:visible"><rect x=".600" y="4.600" width="6.800" height="9.400" fill="#fff" stroke="#222" stroke-width="1.100"/><rect x="1.800" y="6.600" width="3.400" height="3.400" fill="#111"/><circle cx="3" cy="8.200" r=".9" fill="#3aa8ff"/><rect x="1.800" y="11" width="4" height="1.200" fill="#d8d8e4"/><path d="M1.400 1.800L7.200 10v4.400c0 .6 2.600.6 2.600 0V10l5.800-8.200z" fill="url(#gFun)" stroke="#5c636a" stroke-width=".7"/><ellipse cx="8.500" cy="1.900" rx="7.200" ry="1.700" fill="#dfe5ea" stroke="#6a7178" stroke-width=".8"/><ellipse cx="8.500" cy="2.100" rx="5.400" ry=".9" fill="#a9b3bc"/></svg></span>
<svg class="ic" style="left:435px;top:85px" width="12" height="7"><path d="M0.500 1.200h10l-5 5z" fill="#1c1848"/></svg>
<div style="left:456px;top:78px;width:216px;height:19px;background:#fff;border:1px solid #fafafa;border-top:2px solid #737373;border-left:1px solid #737373;box-sizing:border-box"></div>
<svg class="ic" style="left:460px;top:85px" width="12" height="7"><path d="M0.500 1.200h10l-5 5z" fill="#1c1848"/></svg>
<span class="t" style="left:474.7px;top:82.0px;font:12.3px/normal 'DejaVu Sans','Liberation Sans',sans-serif;color:#000;letter-spacing:0.011px;">filter  images</span>
<div style="left:677px;top:73px;width:30px;height:30px;background:#dcdcdc;border-radius:4px"></div>
<span class="ic" style="left:684px;top:80px"><svg width="16" height="16" viewBox="0 0 16 16" style="overflow:visible"><rect x=".5" y=".5" width="15" height="14" fill="#fff" stroke="#1a2fc4"/><rect x="1" y="1" width="14" height="2.200" fill="#4f95ff"/><rect x="1" y="13.200" width="14" height="1.400" fill="#2244d0"/><circle cx="4.2" cy="5.8" r="1.600" fill="#f26a0c"/><rect x="6.0" y="6.0" width="1.800" height="1.200" fill="#b8b8b8"/><circle cx="4.2" cy="10.5" r="1.600" fill="#f26a0c"/><rect x="6.0" y="10.7" width="1.800" height="1.200" fill="#b8b8b8"/><circle cx="11.0" cy="5.8" r="1.600" fill="#f26a0c"/><rect x="12.8" y="6.0" width="1.800" height="1.200" fill="#b8b8b8"/><circle cx="11.0" cy="10.5" r="1.600" fill="#f26a0c"/><rect x="12.8" y="10.7" width="1.800" height="1.200" fill="#b8b8b8"/></svg></span>
<span class="ic" style="left:714px;top:80px"><svg width="16" height="16" viewBox="0 0 16 16" style="overflow:visible"><rect x=".5" y=".5" width="15" height="14" fill="#fff" stroke="#1a2fc4"/><rect x="1" y="1" width="14" height="2.200" fill="#4f95ff"/><rect x="1" y="13.200" width="14" height="1.400" fill="#2244d0"/><rect x="3" y="4.3" width="1.800" height="1.600" fill="#9a9a9a"/><rect x="6.600" y="4.5" width="6.400" height="1.300" fill="#6e6e6e"/><rect x="3" y="7.3" width="1.800" height="1.600" fill="#9a9a9a"/><rect x="6.600" y="7.5" width="6.400" height="1.300" fill="#6e6e6e"/><rect x="3" y="10.3" width="1.800" height="1.600" fill="#9a9a9a"/><rect x="6.600" y="10.5" width="6.400" height="1.300" fill="#6e6e6e"/></svg></span>
<span class="ic" style="left:739px;top:80px"><svg width="16" height="16" viewBox="0 0 16 16" style="overflow:visible"><path d="M1 7.6C1 4.6 3.4 3 6 3h3.6V.6L14.6 4.2 9.6 7.8V5.4H6.4C4.6 5.4 3.6 6.2 3.4 7.8z" fill="url(#gGreen)" stroke="#2a7a18" stroke-width=".8" stroke-linejoin="round"/><path d="M14.6 8.4c0 3-2.4 4.6-5 4.6H6v2.4L1 11.8l5-3.6v2.4h3.200c1.800 0 2.800-.8 3-2.400z" fill="url(#gGreen)" stroke="#2a7a18" stroke-width=".8" stroke-linejoin="round"/></svg></span>
<div style="left:764px;top:75px;width:1px;height:26px;background:#cdcdcd"></div>
<div style="left:765px;top:75px;width:1px;height:26px;background:#f0f0f0"></div>
<div style="left:773px;top:73px;width:30px;height:30px;background:#dcdcdc;border-radius:4px"></div>
<span class="ic" style="left:780px;top:80px"><svg width="18" height="16" viewBox="0 0 18 16" style="overflow:visible"><path d="M2.6.8v12" stroke="#3f66a4" stroke-width="1.1"/><path d="M2.6 8v5" stroke="#2c2c40" stroke-width="1.1"/><path d="M.2 10.800L2.600 14.200 5 10.800z" fill="#2a2a3c"/><text x="4.800" y="7" font-family="'Liberation Serif','DejaVu Serif',serif" font-weight="bold" font-size="13.800" fill="#107f6c" stroke="#107f6c" stroke-width=".35">a</text><text x="9.600" y="14.900" font-family="'Liberation Serif','DejaVu Serif',serif" font-weight="bold" font-size="13.800" fill="#84128e" stroke="#84128e" stroke-width=".35">z</text></svg></span>
<span class="t" style="left:406.0px;top:110.0px;font:bold 12px/normal 'DejaVu Sans','Liberation Sans',sans-serif;color:#000;letter-spacing:-0.058px;">Workspace: 10 of 10 images</span>
<div style="left:406px;top:124px;width:400px;height:584px;background:#b6cde7"></div>
<div style="left:408px;top:126px;width:396px;height:580px;border:1px solid #4a62b4;box-sizing:border-box;background:#fff"></div>
<div style="left:409px;top:127px;width:394px;height:18px;background:linear-gradient(#b7cee8 0%,#dfe9f5 22%,#ffffff 42%,#ffffff 52%,#dce7f4 75%,#b3cae5 100%)"></div>
<div style="left:410px;top:146px;width:392px;height:558px;border:1px solid #b4b4b4;border-right-color:#e6e9ee;border-bottom-color:#e6e9ee;box-sizing:border-box;background:#f8fbfe"></div>
<span class="t" style="left:416.8px;top:126.9px;font:14.9px/normal 'DejaVu Sans Light','DejaVu Sans','Liberation Sans',sans-serif;color:#000;letter-spacing:-0.149px;-webkit-text-stroke:0.22px #000;">P-TRE_15_R3D_D3D.dv (07-Apr-2014)</span>
<div style="left:413px;top:149px;width:64px;height:76px;box-sizing:border-box;border:1px solid #4c68be;background:#fff"><div style="left:0px;top:0;width:62px;height:13px;background:repeating-linear-gradient(#f9fdfb 0,#f9fdfb 1.600px,#e4f4eb 1.600px,#e4f4eb 3.200px)"></div><svg class="ic" style="left:2px;top:14px" width="58" height="58" viewBox="0 0 58 58"><rect width="58" height="58" fill="#000"/><ellipse cx="28.6" cy="31" rx="16" ry="24" fill="#86101a" opacity="0.95" transform="rotate(8 28.6 31)" filter="url(#h3)"/><ellipse cx="31.5" cy="30" rx="10.5" ry="10" fill="#822cd4" opacity="1" filter="url(#h2)"/><ellipse cx="27" cy="28" rx="5" ry="6" fill="#cc1c8a" opacity="0.8" filter="url(#h2)"/><ellipse cx="36" cy="26" rx="3" ry="3" fill="#cc1c8a" opacity="0.7" filter="url(#b1)"/><path d="M33.500 21.500C32 27 28 33 24.800 39.500" fill="none" stroke="#7cf428" stroke-width="2" stroke-linecap="round" opacity="1" filter="url(#b05)"/><ellipse cx="24.6" cy="40" rx="1.5" ry="1.5" fill="#ffb020" opacity="1" filter="url(#b05)"/><ellipse cx="21.5" cy="38.5" rx="1" ry="1" fill="#ff2038" opacity="1" filter="url(#b05)"/></svg><svg class="ic" style="left:1.600px;top:1.600px" width="10" height="10" viewBox="-.5 -.5 10 10"><g transform="translate(-0.4 -0.1) scale(1.13)"><path d="M.9.4h6.100v4.600l-1.600 1.600h-5v-5.700z" fill="url(#gTag)" stroke="#dca624" stroke-width=".5"/><circle cx="1" cy="1.300" r="1.200" fill="#e8141c"/></g></svg></div>
<div style="left:480px;top:149px;width:64px;height:76px;box-sizing:border-box;border:1px solid #4c68be;background:#fff"><div style="left:0px;top:0;width:62px;height:13px;background:repeating-linear-gradient(#f9fdfb 0,#f9fdfb 1.600px,#e4f4eb 1.600px,#e4f4eb 3.200px)"></div><svg class="ic" style="left:2px;top:14px" width="58" height="58" viewBox="0 0 58 58"><rect width="58" height="58" fill="#000"/><path d="M0 3L14 2 30 12 58 20 58 44 40 58H24L20 46 2 30z" fill="#2a9a24" opacity=".95" filter="url(#h3)"/><path d="M2 6L22 40M0 22L26 50M6 2L30 18M58 24L34 50M28 50V58M40 44L46 58M12 10L40 16M0 12L18 30" fill="none" stroke="#58e038" stroke-width="1" stroke-linecap="round" opacity="0.6" filter="url(#b05)"/><ellipse cx="24.5" cy="3.5" rx="10" ry="6.5" fill="#2a20e0" opacity="0.95" filter="url(#b1)"/><ellipse cx="27.5" cy="30.5" rx="14.5" ry="14.5" fill="#c01c7c" opacity="1" filter="url(#b1)"/><ellipse cx="26" cy="27" rx="10" ry="9" fill="#8a38e8" opacity="0.75" filter="url(#h2)"/><ellipse cx="29" cy="43.5" rx="1.3" ry="1.6" fill="#f8f060" opacity="1" filter="url(#b05)"/></svg><svg class="ic" style="left:1.600px;top:1.600px" width="10" height="10" viewBox="-.5 -.5 10 10"><g transform="translate(-0.4 -0.1) scale(1.13)"><path d="M.9.4h6.100v4.600l-1.600 1.600h-5v-5.700z" fill="url(#gTag)" stroke="#dca624" stroke-width=".5"/><circle cx="1" cy="1.300" r="1.200" fill="#e8141c"/></g></svg></div>
<div style="left:545px;top:147px;width:68px;height:80px;background:#0f1f5a"></div>
<div style="left:547px;top:149px;width:64px;height:76px;box-sizing:border-box;border:1px solid #4c68be;background:#fff"><div style="left:1px;top:0;width:60px;height:12px;background:linear-gradient(#1b2b66 0%,#5a6aa0 28%,#eef1f7 52%,#6a7aae 78%,#22326c 100%)"></div><svg class="ic" style="left:2px;top:14px" width="58" height="58" viewBox="0 0 58 58"><rect width="58" height="58" fill="#000"/><ellipse cx="28" cy="36" rx="26" ry="12" fill="#86101a" opacity="0.95" transform="rotate(-38 28 36)" filter="url(#h3)"/><ellipse cx="29.5" cy="30" rx="9.5" ry="7" fill="#822cd4" opacity="1" transform="rotate(-30 29.5 30)" filter="url(#h2)"/><ellipse cx="31" cy="33" rx="5" ry="4" fill="#cc1c8a" opacity="0.7" filter="url(#h2)"/><path d="M37.500 24C33 27 26 31 21 35.500" fill="none" stroke="#86f428" stroke-width="2" stroke-linecap="round" opacity="1" filter="url(#b05)"/><ellipse cx="37" cy="24.5" rx="1.5" ry="1.5" fill="#fff050" opacity="1" filter="url(#b05)"/><ellipse cx="21" cy="35.5" rx="1.5" ry="1.5" fill="#fff050" opacity="1" filter="url(#b05)"/><ellipse cx="16" cy="38" rx="1.2" ry="1.2" fill="#ff2030" opacity="1" filter="url(#b05)"/></svg><svg class="ic" style="left:1.600px;top:1.600px" width="10" height="10" viewBox="-.5 -.5 10 10"><g transform="translate(-0.4 -0.1) scale(1.13)"><path d="M.9.4h6.100v4.600l-1.600 1.600h-5v-5.700z" fill="url(#gTag)" stroke="#dca624" stroke-width=".5"/><circle cx="1" cy="1.300" r="1.200" fill="#e8141c"/></g></svg></div>
<div style="left:614px;top:149px;width:64px;height:76px;box-sizing:border-box;border:1px solid #4c68be;background:#fff"><div style="left:0px;top:0;width:62px;height:13px;background:repeating-linear-gradient(#f9fdfb 0,#f9fdfb 1.600px,#e4f4eb 1.600px,#e4f4eb 3.200px)"></div><svg class="ic" style="left:2px;top:14px" width="58" height="58" viewBox="0 0 58 58"><rect width="58" height="58" fill="#000"/><ellipse cx="29" cy="30" rx="20" ry="25" fill="#3a0a0a" opacity="0.6" filter="url(#b3)"/><ellipse cx="28.3" cy="30.2" rx="10.5" ry="4.5" fill="#2a24d8" opacity="0.95" filter="url(#b2)"/><ellipse cx="28.300" cy="28.600" rx="6.500" ry="10.500" fill="none" stroke="#38b830" stroke-width="1.300" opacity=".85" filter="url(#b05)"/><ellipse cx="29.5" cy="18" rx="1.3" ry="1.3" fill="#c0c040" opacity="1" filter="url(#b05)"/><ellipse cx="26.5" cy="39" rx="1.2" ry="1.2" fill="#b0c040" opacity="1" filter="url(#b05)"/></svg></div>
<div style="left:681px;top:149px;width:64px;height:76px;box-sizing:border-box;border:1px solid #4c68be;background:#fff"><div style="left:0px;top:0;width:62px;height:13px;background:repeating-linear-gradient(#f9fdfb 0,#f9fdfb 1.600px,#e4f4eb 1.600px,#e4f4eb 3.200px)"></div><svg class="ic" style="left:2px;top:14px" width="58" height="58" viewBox="0 0 58 58"><rect width="58" height="58" fill="#000"/><ellipse cx="31" cy="31" rx="29" ry="19" fill="#86101a" opacity="0.95" transform="rotate(-28 31 31)" filter="url(#h3)"/><ellipse cx="29" cy="31.5" rx="12.5" ry="12" fill="#822cd4" opacity="1" filter="url(#h2)"/><ellipse cx="27" cy="30" rx="7" ry="7" fill="#cc1c8a" opacity="0.7" filter="url(#h2)"/><ellipse cx="29.9" cy="24.6" rx="2.6" ry="2.6" fill="#50f030" opacity="1" filter="url(#b1)"/><ellipse cx="26.7" cy="40.5" rx="2" ry="2.4" fill="#70f030" opacity="1" filter="url(#b1)"/><ellipse cx="38.3" cy="22.7" rx="1.7" ry="1.9" fill="#ff1838" opacity="1" filter="url(#b05)"/></svg><svg class="ic" style="left:1.600px;top:1.600px" width="10" height="10" viewBox="-.5 -.5 10 10"><g transform="translate(-0.4 -0.1) scale(1.13)"><path d="M.9.4h6.100v4.600l-1.600 1.600h-5v-5.700z" fill="url(#gTag)" stroke="#dca624" stroke-width=".5"/><circle cx="1" cy="1.300" r="1.200" fill="#e8141c"/></g></svg></div>
<div style="left:413px;top:228px;width:64px;height:76px;box-sizing:border-box;border:1px solid #4c68be;background:#fff"><div style="left:0px;top:0;width:62px;height:13px;background:repeating-linear-gradient(#f9fdfb 0,#f9fdfb 1.600px,#e4f4eb 1.600px,#e4f4eb 3.200px)"></div><svg class="ic" style="left:2px;top:14px" width="58" height="58" viewBox="0 0 58 58"><rect width="58" height="58" fill="#000"/><ellipse cx="28" cy="30" rx="32" ry="17" fill="#86101a" opacity="0.95" transform="rotate(38 28 30)" filter="url(#h3)"/><ellipse cx="29.4" cy="31" rx="11.5" ry="13.5" fill="#822cd4" opacity="1" transform="rotate(20 29.4 31)" filter="url(#h2)"/><ellipse cx="30" cy="33" rx="7" ry="8" fill="#cc1c8a" opacity="0.7" filter="url(#h2)"/><path d="M20.700 18.300C25 24 32 33 38.200 39" fill="none" stroke="#88f428" stroke-width="2" stroke-linecap="round" opacity="1" filter="url(#b05)"/><ellipse cx="20.7" cy="18.3" rx="1.6" ry="1.6" fill="#c8ff40" opacity="1" filter="url(#b05)"/><ellipse cx="38.2" cy="39" rx="1.6" ry="1.6" fill="#ffe040" opacity="1" filter="url(#b05)"/></svg><svg class="ic" style="left:1.600px;top:1.600px" width="10" height="10" viewBox="-.5 -.5 10 10"><g transform="translate(-0.4 -0.1) scale(1.13)"><path d="M.9.4h6.100v4.600l-1.600 1.600h-5v-5.700z" fill="url(#gTag)" stroke="#dca624" stroke-width=".5"/><circle cx="1" cy="1.300" r="1.200" fill="#e8141c"/></g></svg></div>
<div style="left:480px;top:228px;width:64px;height:76px;box-sizing:border-box;border:1px solid #4c68be;background:#fff"><div style="left:0px;top:0;width:62px;height:13px;background:repeating-linear-gradient(#f9fdfb 0,#f9fdfb 1.600px,#e4f4eb 1.600px,#e4f4eb 3.200px)"></div><svg class="ic" style="left:2px;top:14px" width="58" height="58" viewBox="0 0 58 58"><rect width="58" height="58" fill="#000"/><ellipse cx="29.9" cy="29.4" rx="16" ry="14" fill="#b02814" opacity="0.95" filter="url(#b2)"/><ellipse cx="29.9" cy="29.4" rx="8.5" ry="8.5" fill="#7c30e0" opacity="1" filter="url(#b1)"/><path d="M23.500 25C25 20.500 34 20.500 36 25" fill="none" stroke="#70f030" stroke-width="2.2" stroke-linecap="round" opacity="0.95" filter="url(#b1)"/><ellipse cx="29.4" cy="36" rx="3.2" ry="1.9" fill="#e8f030" opacity="1" filter="url(#b1)"/></svg><svg class="ic" style="left:1.600px;top:1.600px" width="10" height="10" viewBox="-.5 -.5 10 10"><g transform="translate(-0.4 -0.1) scale(1.13)"><path d="M.9.4h6.100v4.600l-1.600 1.600h-5v-5.700z" fill="url(#gTag)" stroke="#dca624" stroke-width=".5"/><circle cx="1" cy="1.300" r="1.200" fill="#e8141c"/></g></svg></div>
<div style="left:547px;top:228px;width:64px;height:76px;box-sizing:border-box;border:1px solid #4c68be;background:#fff"><div style="left:0px;top:0;width:62px;height:13px;background:repeating-linear-gradient(#f9fdfb 0,#f9fdfb 1.600px,#e4f4eb 1.600px,#e4f4eb 3.200px)"></div><svg class="ic" style="left:2px;top:14px" width="58" height="58" viewBox="0 0 58 58"><rect width="58" height="58" fill="#000"/><ellipse cx="27.3" cy="30.2" rx="15" ry="13.5" fill="#3a22cc" opacity="1" filter="url(#h2)"/><ellipse cx="24" cy="30" rx="7" ry="8" fill="#6a24c8" opacity="0.6" filter="url(#h2)"/><ellipse cx="32" cy="24" rx="5.5" ry="5" fill="#3420c0" opacity="0.8" filter="url(#b2)"/><ellipse cx="20.2" cy="26.7" rx="1.9" ry="1.4" fill="#f4f040" opacity="1" filter="url(#b05)"/><ellipse cx="36.1" cy="28.6" rx="2.2" ry="2.4" fill="#50f030" opacity="1" filter="url(#b05)"/></svg></div>
<div style="left:614px;top:228px;width:64px;height:76px;box-sizing:border-box;border:1px solid #4c68be;background:#fff"><div style="left:0px;top:0;width:62px;height:13px;background:repeating-linear-gradient(#f9fdfb 0,#f9fdfb 1.600px,#e4f4eb 1.600px,#e4f4eb 3.200px)"></div><svg class="ic" style="left:2px;top:14px" width="58" height="58" viewBox="0 0 58 58"><rect width="58" height="58" fill="#000"/><ellipse cx="28" cy="30" rx="31" ry="15" fill="#7a0c12" opacity="0.9" transform="rotate(22 28 30)" filter="url(#h3)"/><ellipse cx="29.9" cy="31.8" rx="20" ry="11" fill="#4a2ad4" opacity="1" transform="rotate(22 29.9 31.8)" filter="url(#h2)"/><ellipse cx="30" cy="32" rx="11" ry="7" fill="#a0209c" opacity="0.55" transform="rotate(22 30 32)" filter="url(#h2)"/><ellipse cx="17.2" cy="28.6" rx="3.6" ry="3.3" fill="#50f028" opacity="1" filter="url(#b1)"/><ellipse cx="40.2" cy="40.5" rx="3.6" ry="3.3" fill="#60f028" opacity="1" filter="url(#b1)"/><path d="M2 44L12 58" fill="none" stroke="#30a030" stroke-width="1" stroke-linecap="round" opacity="0.6" filter="url(#b05)"/></svg><svg class="ic" style="left:1.600px;top:1.600px" width="10" height="10" viewBox="-.5 -.5 10 10"><g transform="translate(-0.4 -0.1) scale(1.13)"><path d="M.9.4h6.100v4.600l-1.600 1.600h-5v-5.700z" fill="url(#gTag)" stroke="#dca624" stroke-width=".5"/><circle cx="1" cy="1.300" r="1.200" fill="#e8141c"/></g></svg></div>
<div style="left:681px;top:228px;width:64px;height:76px;box-sizing:border-box;border:1px solid #4c68be;background:#fff"><div style="left:0px;top:0;width:62px;height:13px;background:repeating-linear-gradient(#f9fdfb 0,#f9fdfb 1.600px,#e4f4eb 1.600px,#e4f4eb 3.200px)"></div><svg class="ic" style="left:2px;top:14px" width="58" height="58" viewBox="0 0 58 58"><rect width="58" height="58" fill="#000"/><ellipse cx="21.6" cy="31.5" rx="5" ry="5" fill="#1c58f0" opacity="1" filter="url(#b1)"/><ellipse cx="39.9" cy="26.2" rx="5" ry="5.3" fill="#1c58f0" opacity="1" filter="url(#b1)"/><ellipse cx="21.6" cy="31.5" rx="2.4" ry="2.4" fill="#20c060" opacity="0.7" filter="url(#b1)"/><ellipse cx="38.5" cy="25" rx="2.2" ry="2.8" fill="#30d050" opacity="0.7" filter="url(#b1)"/></svg></div>
<span class="ic" style="left:413px;top:715px"><svg width="17" height="16" viewBox="0 0 17 16" style="overflow:visible"><path d="M10.4 9.3l4.600 4.600" stroke="#b8621a" stroke-width="2.500" stroke-linecap="round"/><path d="M10.6 9.5l4.300 4.300" stroke="#ffa22c" stroke-width="1.300" stroke-linecap="round"/><circle cx="7" cy="5.7" r="4.700" fill="url(#gLens)" stroke="#8a8f98" stroke-width="1.200"/><rect x=".2" y="11.600" width="8.200" height="2.800" rx=".8" fill="url(#gGreen)" stroke="#2c9a1a" stroke-width=".6"/></svg></span>
<span class="ic" style="left:433px;top:715px"><svg width="17" height="17" viewBox="0 0 17 17" style="overflow:visible"><path d="M10.4 9.3l4.600 4.600" stroke="#b8621a" stroke-width="2.500" stroke-linecap="round"/><path d="M10.6 9.5l4.300 4.300" stroke="#ffa22c" stroke-width="1.300" stroke-linecap="round"/><circle cx="7" cy="5.7" r="4.700" fill="url(#gLens)" stroke="#8a8f98" stroke-width="1.200"/><path d="M.2 11h2.600V8.400h2.800V11h2.600v2.800H5.600v2.600H2.800v-2.600H.2z" fill="url(#gGreen)" stroke="#2c9a1a" stroke-width=".6"/></svg></span>
<span class="ic" style="left:458px;top:715px"><svg width="16" height="16" viewBox="0 0 16 16" style="overflow:visible"><path d="M9.4 9.6l4.600 4.600" stroke="#b8621a" stroke-width="2.500" stroke-linecap="round"/><path d="M9.6 9.8l4.300 4.300" stroke="#ffa22c" stroke-width="1.300" stroke-linecap="round"/><circle cx="6" cy="6" r="4.700" fill="url(#gLens)" stroke="#8a8f98" stroke-width="1.200"/><rect x="3.3" y="3.3" width="2" height="2" fill="#22a83a"/><rect x="3.3" y="6.699999999999999" width="2" height="2" fill="#22a83a"/><rect x="6.699999999999999" y="3.3" width="2" height="2" fill="#22a83a"/><rect x="6.699999999999999" y="6.699999999999999" width="2" height="2" fill="#22a83a"/></svg></span>
<svg class="ic" style="left:487px;top:715px" width="12" height="14"><path d="M11 2.200v9.800L1.200 7.100z" fill="url(#gTri)" stroke="#2a6fd8" stroke-width="0.500"/></svg>
<svg class="ic" style="left:673px;top:715px" width="12" height="14"><path d="M1 2.200v9.800L10.800 7.100z" fill="url(#gTri)" stroke="#2a6fd8" stroke-width="0.500"/></svg>
<div style="left:508px;top:720px;width:156px;height:4px;background:linear-gradient(#2b2b2b,#5a5a5a);border-radius:2px;border-bottom:1px solid #aaa;box-sizing:border-box"></div>
<div style="left:528px;top:714.5px;width:15px;height:15px;border-radius:50%;background:radial-gradient(circle at 50% 30%,#cfe6ff 0%,#6fb0f5 35%,#2f7fe0 70%,#9fd0ff 100%);border:1px solid #1d5aa8;box-sizing:border-box"></div>
<svg class="ic" style="left:809px;top:67px" width="7" height="19"><path d="M6 0.3v6.4L0.4 3.5zM0.6 11v7l5.6-3.5z" fill="#787878"/></svg>
<div style="left:808px;top:398px;width:9px;height:10px;background:#fff;border-top:1px solid #c6c6c6;border-bottom:1px solid #c6c6c6;box-sizing:border-box"></div>
<div style="left:809px;top:400px;width:6px;height:6px;border-radius:50%;background:#c8c8c8;border:1px solid #b6b6b6;box-sizing:border-box"></div>
<div style="left:825px;top:82px;width:419px;height:647px;background:#f1f1f1;border:1px solid #e9e9e9;border-radius:4px;box-sizing:border-box"></div>
<div style="left:828px;top:99px;width:414px;height:627px;background:#fff;border:1px solid #b4b4b4;box-sizing:border-box"></div>
<div style="left:919px;top:70px;width:231px;height:21px;background:#fff;border:1px solid #bdbdbd;border-radius:5px;box-sizing:border-box;box-shadow:0 1px 0 rgba(0,0,0,0.04)"></div>
<div style="left:920px;top:71px;width:67px;height:19px;background:#e1e1e1;border-radius:4px 0 0 4px"></div>
<div style="left:1081px;top:71px;width:1px;height:19px;background:#d4d4d4"></div>
<span class="t" style="left:928.5px;top:74.0px;font:12.3px/normal 'DejaVu Sans','Liberation Sans',sans-serif;color:#bcbcbc;letter-spacing:-0.353px;text-shadow:0 1px 0 #fff;">General</span>
<span class="t" style="left:999.0px;top:74.0px;font:12.3px/normal 'DejaVu Sans','Liberation Sans',sans-serif;color:#000;letter-spacing:0.422px;">Acquisition</span>
<span class="t" style="left:1094.0px;top:74.0px;font:12.3px/normal 'DejaVu Sans','Liberation Sans',sans-serif;color:#000;letter-spacing:-0.125px;">Preview</span>
<div style="left:835px;top:107px;width:69px;height:18px;background:#ececec;border:1px solid #9a9a9a;box-sizing:border-box"></div>
<span class="t" style="left:841.0px;top:110.0px;font:10.5px/normal 'DejaVu Sans','Liberation Sans',sans-serif;color:#000;letter-spacing:-0.045px;">Full Viewer</span>
<span class="ic" style="left:1122px;top:109px"><svg width="16" height="16" viewBox="0 0 16 16" style="overflow:visible"><rect x="0" y="0" width="16" height="15.500" fill="#e9e9e9"/><rect x="0.7" y="0.8" width="4.300" height="6.500" fill="#0d5a2c"/><path d="M1.3 1.8l3 4.500" stroke="#063818" stroke-width="1.300"/><rect x="0.7" y="8.0" width="4.300" height="6.500" fill="#0d5a2c"/><path d="M1.3 9.0l3 4.500" stroke="#063818" stroke-width="1.300"/><rect x="5.8" y="0.8" width="4.300" height="6.500" fill="#0a0a0a"/><ellipse cx="8.0" cy="4.1" rx="1.300" ry="2.200" fill="#e01818" transform="rotate(25 8.0 4.1)"/><rect x="5.8" y="8.0" width="4.300" height="6.500" fill="#0a0a0a"/><ellipse cx="8.0" cy="11.3" rx="1.300" ry="2.200" fill="#e01818" transform="rotate(25 8.0 11.3)"/><rect x="10.9" y="0.8" width="4.300" height="6.500" fill="#0d5a2c"/><ellipse cx="13.5" cy="3.8" rx=".9" ry="2" fill="#d01c1c" transform="rotate(30 13.5 3.8)"/><path d="M10.9 1.8l3 4" stroke="#19a040" stroke-width=".8"/><rect x="10.9" y="8.0" width="4.300" height="6.500" fill="#0d5a2c"/><ellipse cx="13.5" cy="11.0" rx=".9" ry="2" fill="#d01c1c" transform="rotate(30 13.5 11.0)"/><path d="M10.9 9.0l3 4" stroke="#19a040" stroke-width=".8"/></svg></span>
<span class="ic" style="left:1147px;top:109px"><svg width="16" height="16" viewBox="0 0 16 16" style="overflow:visible"><path d="M.6 2.200c0-1 .5-1.600 1.400-1.600h4.200c1 0 1.600.6 2 1.400l.5 1 5.200.200c1.200.100 1.800.800 1.800 2v7.800c0 .9-.5 1.400-1.400 1.400H.6z" fill="#8fc0ff" stroke="#0b28c0" stroke-width="1.100"/><path d="M1.400 2.100c.1-.5.400-.8.900-.8h3.600c.7 0 1.200.400 1.500 1l.3.800H1.400z" fill="#f2f7ff"/><path d="M9 5.600h4.800v8H9z" fill="#2a6cf0"/><path d="M13.800 5v9" stroke="#0b28c0" stroke-width="1"/><rect x=".5" y="6.600" width="7.700" height="8" fill="#ececf2" stroke="#3c3c44" stroke-width="1"/><rect x="1.400" y="7.500" width="5.900" height="4.600" fill="url(#gSky)"/><rect x="1.400" y="13" width="5.900" height="1" fill="#b8b8c8"/></svg></span>
<span class="ic" style="left:1172px;top:109px"><svg width="16" height="15" viewBox="0 0 16 15" style="overflow:visible"><g stroke="#111" fill="none"><path d="M.8 14.500L5 .5" stroke-width="1.700"/><path d="M9.800 14.500L14 .5" stroke-width="1.700"/><path d="M14.700 14.500l.5-3.500" stroke-width="1.300"/><path d="M4.800 14.500v-2M6.800 14.500v-2M8.600 14.500v-2M12.600 14.500v-2" stroke-width="1.100"/></g></svg></span>
<span class="ic" style="left:1198px;top:109px"><svg width="16" height="16" viewBox="0 0 16 16" style="overflow:visible"><path d="M.6.600h8.200l4 4v10H.6z" fill="#fff" stroke="#b4b4b4" stroke-width=".9"/><path d="M8.800.600v4h4" fill="#eee" stroke="#b4b4b4" stroke-width=".8"/><path d="M2 2h1.600v11H2z" fill="#6a6a6a"/><path d="M2 5.500h1.600v3H2z" fill="#2a8a8a"/><path d="M2 8.500h1.600v2H2z" fill="#2ea02e"/><circle cx="2.800" cy="12.400" r="1.200" fill="#e02020"/><path d="M2 2h1.600v1.300H2z" fill="#222"/><path d="M7.400 6.800h5v3.400H15l-5.100 4.600-5.100-4.600h2.600z" fill="#e62430" stroke="#b8101c" stroke-width=".6"/><path d="M8 7.400h3.800v1.400H8z" fill="#ff8a90" opacity=".8"/></svg></span>
<div style="left:836px;top:131px;width:398px;height:1px;background:#c9c9c9"></div>
<span class="t" style="left:834.5px;top:147.7px;font:bold 12.4px/normal 'DejaVu Sans','Liberation Sans',sans-serif;color:#000;letter-spacing:0.181px;">P-TRE_15_R3D_D3D.dv</span>
<span class="ic" style="left:1222px;top:149px"><svg width="13" height="13" viewBox="0 0 13 13" style="overflow:visible"><path d="M2.400 10.200L10.600 2" stroke="#3c8a14" stroke-width="3.300" stroke-linecap="round"/><path d="M2.700 9.900L10.500 2.100" stroke="#7ede28" stroke-width="1.800" stroke-linecap="round"/><path d="M.3 11.900l.9-2.700 1.900 1.800z" fill="#6a6a5a"/></svg></span>
<span class="t" style="left:832.2px;top:170.0px;font:bold 13px/normal 'DejaVu Sans Condensed','DejaVu Sans','Liberation Sans',sans-serif;color:#000;letter-spacing:0.229px;">Image ID: 165854</span>
<span class="t" style="left:832.2px;top:187.0px;font:bold 13px/normal 'DejaVu Sans Condensed','DejaVu Sans','Liberation Sans',sans-serif;color:#000;letter-spacing:-0.097px;">Owner: Polly Stack</span>
<span class="ic" style="left:1180px;top:188px"><svg width="10" height="12" viewBox="0 0 10 12" style="overflow:visible"><rect x=".5" y=".5" width="8.500" height="11" rx="1.200" fill="#f4f6fa" stroke="#7c9cc8" stroke-width="1"/><rect x="1" y="6" width="7.500" height="5" fill="#d8dce4"/><path d="M2.600 5L4.750 2.300 6.900 5zM2.600 7L4.750 9.700 6.900 7z" fill="#151515"/></svg></span>
<span class="t" style="left:1193.0px;top:188.0px;font:10.5px/normal 'DejaVu Sans','Liberation Sans',sans-serif;color:#000;letter-spacing:-0.169px;">Show all</span>
<div class="hdr" style="left:830px;top:205px;width:410px;height:25px;"></div>
<span class="t" style="left:841.3px;top:211.0px;font:bold 11px/normal 'DejaVu Sans Condensed','DejaVu Sans','Liberation Sans',sans-serif;color:#000;letter-spacing:-0.056px;">Image Details</span>
<svg class="ic" style="left:1214px;top:208px" width="18" height="18"><circle cx="9" cy="9" r="7.6" fill="#fbfbfb" stroke="#777" stroke-width="1"/><path d="M5.6 8.6L9 5.4l3.4 3.2M5.6 12.4L9 9.2l3.4 3.2" fill="none" stroke="#2a2a2a" stroke-width="1.5"/></svg>
<div style="left:838px;top:247px;width:374px;height:16px;background:#fff;border:1px solid #a8a8a8;box-sizing:border-box"></div>
<span class="t" style="left:838.8px;top:249.0px;font:10.5px/normal 'DejaVu Sans','Liberation Sans',sans-serif;color:#7e7e7e;letter-spacing:0.222px;">Add Description</span>
<span class="ic" style="left:1218px;top:249px"><svg width="13" height="13" viewBox="0 0 13 13" style="overflow:visible"><path d="M2.400 10.200L10.600 2" stroke="#3c8a14" stroke-width="3.300" stroke-linecap="round"/><path d="M2.700 9.900L10.500 2.100" stroke="#7ede28" stroke-width="1.800" stroke-linecap="round"/><path d="M.3 11.900l.9-2.700 1.900 1.800z" fill="#6a6a5a"/></svg></span>
<span class="t" style="left:836.5px;top:275.7px;font:bold 11px/normal 'DejaVu Sans Condensed','DejaVu Sans','Liberation Sans',sans-serif;color:#000;letter-spacing:-0.044px;">Acquisition Date:</span>
<span class="t" style="left:1012.5px;top:275.7px;font:10.8px/normal 'DejaVu Sans','Liberation Sans',sans-serif;color:#000;letter-spacing:0.201px;">2014-04-07 13:58:28</span>
<span class="t" style="left:836.5px;top:292.0px;font:bold 11px/normal 'DejaVu Sans Condensed','DejaVu Sans','Liberation Sans',sans-serif;color:#000;letter-spacing:-0.186px;">Import Date:</span>
<span class="t" style="left:1012.5px;top:292.0px;font:10.8px/normal 'DejaVu Sans','Liberation Sans',sans-serif;color:#000;letter-spacing:0.201px;">2014-04-07 13:58:30</span>
<span class="t" style="left:836.5px;top:308.0px;font:bold 11px/normal 'DejaVu Sans Condensed','DejaVu Sans','Liberation Sans',sans-serif;color:#000;letter-spacing:0.003px;">Dimensions (XY):</span>
<span class="t" style="left:1012.5px;top:308.0px;font:10.8px/normal 'DejaVu Sans','Liberation Sans',sans-serif;color:#000;letter-spacing:-0.054px;">512 x 512</span>
<span class="t" style="left:836.5px;top:324.0px;font:bold 11px/normal 'DejaVu Sans Condensed','DejaVu Sans','Liberation Sans',sans-serif;color:#000;letter-spacing:-0.021px;">Pixel Type:</span>
<span class="t" style="left:1012.5px;top:324.0px;font:10.8px/normal 'DejaVu Sans','Liberation Sans',sans-serif;color:#000;letter-spacing:-0.106px;">int16</span>
<span class="t" style="left:836.5px;top:340.0px;font:bold 11px/normal 'DejaVu Sans Condensed','DejaVu Sans','Liberation Sans',sans-serif;color:#000;letter-spacing:-0.118px;">Pixels Size (XYZ) (nm):</span>
<span class="t" style="left:1012.5px;top:340.0px;font:10.8px/normal 'DejaVu Sans','Liberation Sans',sans-serif;color:#000;letter-spacing:0.062px;">66.31x66.31x200.00</span>
<span class="t" style="left:836.5px;top:356.0px;font:bold 11px/normal 'DejaVu Sans Condensed','DejaVu Sans','Liberation Sans',sans-serif;color:#000;letter-spacing:0.213px;">Z-sections/Timepoints:</span>
<span class="t" style="left:1012.5px;top:356.0px;font:10.8px/normal 'DejaVu Sans','Liberation Sans',sans-serif;color:#000;letter-spacing:-0.146px;">70 x 1</span>
<span class="t" style="left:836.5px;top:372.0px;font:bold 11px/normal 'DejaVu Sans Condensed','DejaVu Sans','Liberation Sans',sans-serif;color:#000;letter-spacing:-0.227px;">Channels:</span>
<span class="t" style="left:1012.5px;top:372.0px;font:10.8px/normal 'DejaVu Sans','Liberation Sans',sans-serif;color:#000;letter-spacing:-0.043px;">457, 528, 617</span>
<span class="t" style="left:836.5px;top:389.6px;font:bold 11px/normal 'DejaVu Sans Condensed','DejaVu Sans','Liberation Sans',sans-serif;color:#000;letter-spacing:-0.002px;">ROI Count:</span>
<span class="t" style="left:1012.5px;top:389.6px;font:10.8px/normal 'DejaVu Sans','Liberation Sans',sans-serif;color:#000;letter-spacing:-0.875px;">3</span>
<span class="ic" style="left:1176px;top:373px"><svg width="13" height="13" viewBox="0 0 13 13" style="overflow:visible"><path d="M2.400 10.200L10.600 2" stroke="#3c8a14" stroke-width="3.300" stroke-linecap="round"/><path d="M2.700 9.900L10.500 2.100" stroke="#7ede28" stroke-width="1.800" stroke-linecap="round"/><path d="M.3 11.900l.9-2.700 1.900 1.800z" fill="#6a6a5a"/></svg></span>
<div class="hdr" style="left:830px;top:408px;width:410px;height:25px;"></div>
<span class="t" style="left:841.3px;top:414.0px;font:bold 11px/normal 'DejaVu Sans Condensed','DejaVu Sans','Liberation Sans',sans-serif;color:#000;letter-spacing:0.250px;">Tags</span>
<svg class="ic" style="left:1214px;top:411px" width="18" height="18"><circle cx="9" cy="9" r="7.6" fill="#fbfbfb" stroke="#777" stroke-width="1"/><path d="M5.6 5.8L9 9l3.4-3.2M5.6 9.6L9 12.8l3.4-3.2" fill="none" stroke="#2a2a2a" stroke-width="1.5"/></svg>
<div class="hdr" style="left:830px;top:433px;width:410px;height:25px;"></div>
<span class="t" style="left:841.3px;top:439.0px;font:bold 11px/normal 'DejaVu Sans Condensed','DejaVu Sans','Liberation Sans',sans-serif;color:#000;letter-spacing:0.195px;">Key-Value Pairs</span>
<svg class="ic" style="left:1214px;top:436px" width="18" height="18"><circle cx="9" cy="9" r="7.6" fill="#fbfbfb" stroke="#777" stroke-width="1"/><path d="M5.6 5.8L9 9l3.4-3.2M5.6 9.6L9 12.8l3.4-3.2" fill="none" stroke="#2a2a2a" stroke-width="1.5"/></svg>
<div class="hdr" style="left:830px;top:458px;width:410px;height:25px;"></div>
<span class="t" style="left:841.3px;top:464.0px;font:bold 11px/normal 'DejaVu Sans Condensed','DejaVu Sans','Liberation Sans',sans-serif;color:#000;letter-spacing:-0.266px;">Attachments</span>
<svg class="ic" style="left:1214px;top:461px" width="18" height="18"><circle cx="9" cy="9" r="7.6" fill="#fbfbfb" stroke="#777" stroke-width="1"/><path d="M5.6 5.8L9 9l3.4-3.2M5.6 9.6L9 12.8l3.4-3.2" fill="none" stroke="#2a2a2a" stroke-width="1.5"/></svg>
<div class="hdr" style="left:830px;top:483px;width:410px;height:25px;"></div>
<span class="t" style="left:841.3px;top:489.0px;font:bold 11px/normal 'DejaVu Sans Condensed','DejaVu Sans','Liberation Sans',sans-serif;color:#000;letter-spacing:-0.065px;">Ratings</span>
<svg class="ic" style="left:1214px;top:486px" width="18" height="18"><circle cx="9" cy="9" r="7.6" fill="#fbfbfb" stroke="#777" stroke-width="1"/><path d="M5.6 5.8L9 9l3.4-3.2M5.6 9.6L9 12.8l3.4-3.2" fill="none" stroke="#2a2a2a" stroke-width="1.5"/></svg>
<div class="hdr" style="left:830px;top:508px;width:410px;height:25px;"></div>
<span class="t" style="left:841.3px;top:514.0px;font:bold 11px/normal 'DejaVu Sans Condensed','DejaVu Sans','Liberation Sans',sans-serif;color:#000;letter-spacing:-0.010px;">Comments</span>
<svg class="ic" style="left:1214px;top:511px" width="18" height="18"><circle cx="9" cy="9" r="7.6" fill="#fbfbfb" stroke="#777" stroke-width="1"/><path d="M5.6 5.8L9 9l3.4-3.2M5.6 9.6L9 12.8l3.4-3.2" fill="none" stroke="#2a2a2a" stroke-width="1.5"/></svg>
<div class="hdr" style="left:830px;top:533px;width:410px;height:25px;"></div>
<span class="t" style="left:841.3px;top:539.0px;font:bold 11px/normal 'DejaVu Sans Condensed','DejaVu Sans','Liberation Sans',sans-serif;color:#000;letter-spacing:-0.106px;">Located in</span>
<svg class="ic" style="left:1214px;top:536px" width="18" height="18"><circle cx="9" cy="9" r="7.6" fill="#fbfbfb" stroke="#777" stroke-width="1"/><path d="M5.6 5.8L9 9l3.4-3.2M5.6 9.6L9 12.8l3.4-3.2" fill="none" stroke="#2a2a2a" stroke-width="1.5"/></svg>
<div style="left:0px;top:742px;width:1256px;height:1px;background:#b2b2b2"></div>
<div style="left:0px;top:743px;width:1256px;height:1px;background:#f0f0f0"></div>
<div style="left:0px;top:744px;width:1255px;height:29px;border:1px solid #8c8c8c;box-sizing:border-box;box-shadow:inset 1px 1px 0 #fbfbfb;background:#ebebeb"></div>
</div></body></html>
